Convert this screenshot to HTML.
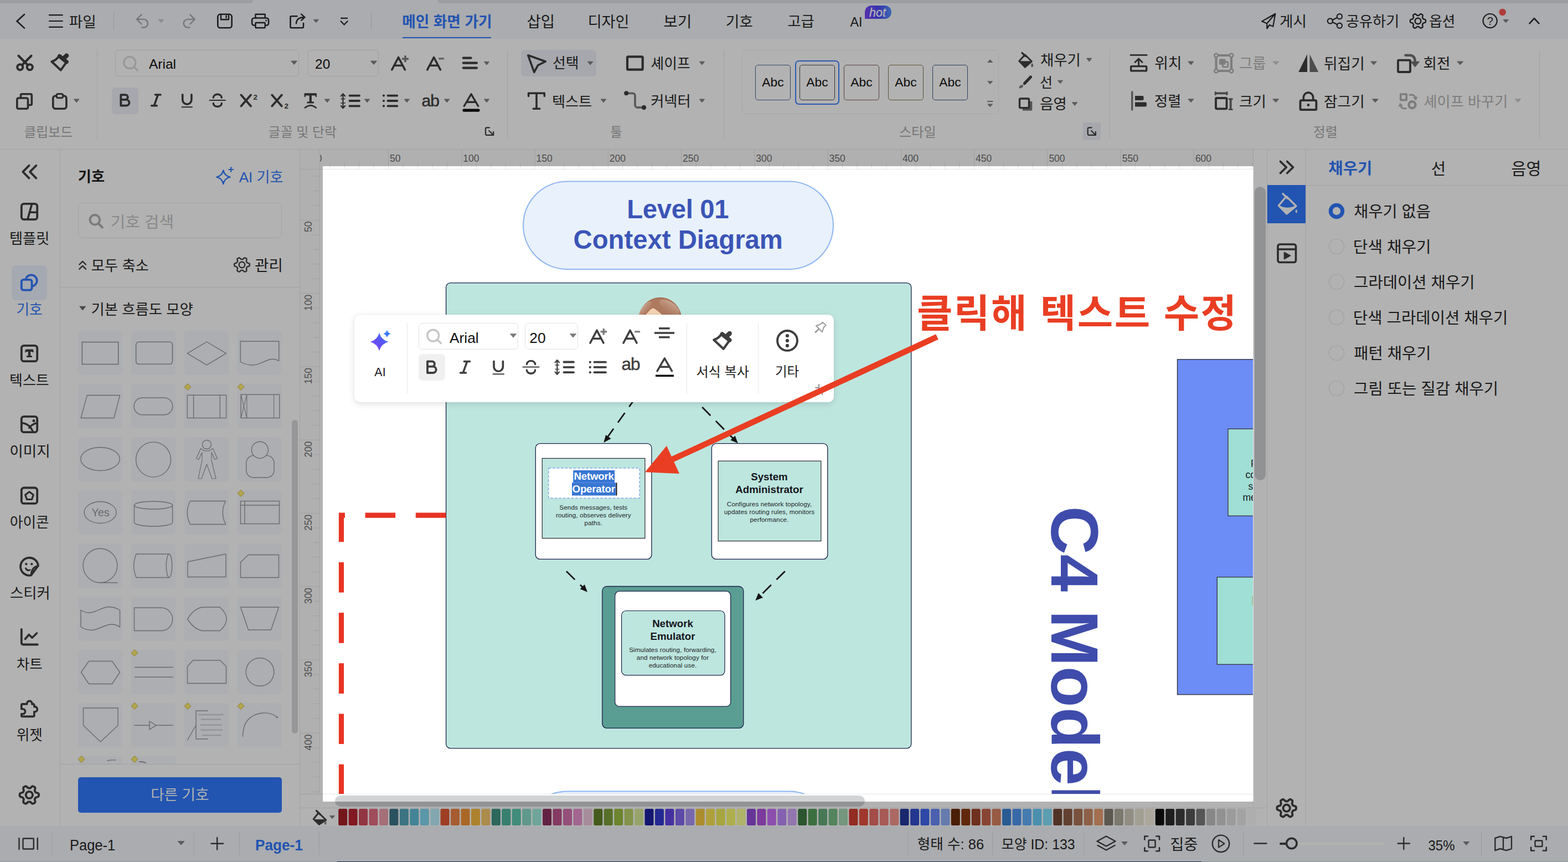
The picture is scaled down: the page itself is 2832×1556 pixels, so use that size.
<!DOCTYPE html><html lang="ko"><head><meta charset="utf-8"><title>EdrawMax</title><style>html,body{margin:0;padding:0}body{width:2832px;height:1556px;position:relative;overflow:hidden;background:#fff;font-family:"Liberation Sans",sans-serif}#ui div,#ui span,#fl div,#fl span{position:absolute;display:block}.L{position:absolute;left:0;top:0;overflow:hidden}#ui,#fl{position:absolute;left:0;top:0;width:2832px;height:1556px}#dim{position:absolute;left:583px;top:300px;width:1681px;height:1147px;box-shadow:0 0 0 3000px rgba(0,0,0,0.3);z-index:9}svg text.k{font-family:"Liberation Sans","Noto Sans CJK KR",sans-serif}</style></head><body><div id="ui" style="z-index:1"><div style="left:2264px;top:270px;width:568px;height:1221px;background:#fff"></div><div style="left:2288px;top:270px;width:1px;height:1221px;background:#e9e9ec"></div><div style="left:2358px;top:270px;width:1px;height:1221px;background:#e9e9ec"></div><div style="left:2359px;top:334px;width:473px;height:1px;background:#e9e9ec"></div><div style="left:2289px;top:334px;width:69px;height:69px;background:#3279fe"></div><div style="left:542px;top:1458px;width:1746px;height:1px;background:#e9e9ec"></div><div style="left:0px;top:1491px;width:2832px;height:65px;background:#f4f6fb"></div><div style="left:93.5px;top:1500.5px;width:1px;height:44px;background:#dfe0e6"></div><div style="left:350px;top:1500.5px;width:1px;height:44px;background:#dfe0e6"></div><div style="left:431.5px;top:1500.5px;width:1px;height:44px;background:#dfe0e6"></div><div style="left:575.5px;top:1500.5px;width:1px;height:44px;background:#dfe0e6"></div><div style="left:1640px;top:1500.5px;width:1px;height:44px;background:#dfe0e6"></div><div style="left:1791.5px;top:1500.5px;width:1px;height:44px;background:#dfe0e6"></div><div style="left:1956.5px;top:1500.5px;width:1px;height:44px;background:#dfe0e6"></div><div style="left:2245px;top:1500.5px;width:1px;height:44px;background:#dfe0e6"></div><div style="left:2674.5px;top:1500.5px;width:1px;height:44px;background:#dfe0e6"></div><div style="left:0px;top:1554.5px;width:609px;height:1.5px;background:#ccd5e5"></div><div style="left:609px;top:1554.5px;width:1561px;height:1.5px;background:#283867"></div><div style="left:2170px;top:1554.5px;width:662px;height:1.5px;background:#c5d1ea"></div><span style="left:126px;top:1514.00px;font-size:25.5px;line-height:25.5px;color:#282828;font-weight:400;font-family:'Liberation Sans',sans-serif;white-space:nowrap;transform:scaleY(1.07);transform-origin:0 21px;">Page-1</span><span style="left:461px;top:1513.00px;font-size:26.2px;line-height:26.2px;color:#3279fe;font-weight:700;font-family:'Liberation Sans',sans-serif;white-space:nowrap;transform:scaleY(1.05);transform-origin:0 22px;">Page-1</span><div style="left:2311px;top:1520.5px;width:190px;height:4px;background:#ffffff;border-radius:2px"></div><div style="left:2311px;top:1520.5px;width:14px;height:4px;background:#3f3f3f;border-radius:2px"></div><span style="left:2579.5px;top:1515.00px;font-size:24px;line-height:24px;color:#282828;font-weight:400;font-family:'Liberation Sans',sans-serif;white-space:nowrap;transform:scaleY(1.07);transform-origin:0 20px;">35%</span><div style="left:0px;top:0px;width:2832px;height:70px;background:#f4f6fb"></div><div style="left:0px;top:0px;width:457px;height:6px;background:#e0e2e7;border-bottom-right-radius:8px"></div><div style="left:790px;top:0px;width:2042px;height:6px;background:#e0e2e7;border-bottom-left-radius:8px"></div><div style="left:0px;top:70px;width:2832px;height:199px;background:#fff"></div><div style="left:0px;top:269px;width:2832px;height:1px;background:#e9e9ec"></div><div style="left:205px;top:22px;width:1px;height:32px;background:#d8d9df"></div><div style="left:670px;top:22px;width:1px;height:32px;background:#d8d9df"></div><div style="left:727px;top:67px;width:160.3px;height:2.3px;background:#3279fe"></div><span style="left:1535.4px;top:29.00px;font-size:23.3px;line-height:23.3px;color:#282828;font-weight:400;font-family:'Liberation Sans',sans-serif;white-space:nowrap;">AI</span><div style="left:1562px;top:10px;width:48px;height:24px;background:linear-gradient(90deg,#7b46fb,#4f49fb 50%,#5496ff);border-radius:12px 12px 12px 0;"><span style="left:8px;top:3.00px;font-size:21.5px;line-height:21.5px;color:#ffffff;font-weight:400;font-family:'Liberation Sans',sans-serif;white-space:nowrap;font-style:italic;-webkit-text-stroke:.3px #ffffff">hot</span></div><span style="left:2691.2px;top:28.00px;font-size:20px;line-height:20px;color:#282828;font-weight:400;font-family:'Liberation Sans',sans-serif;white-space:nowrap;transform:translateX(-50%);">?</span><div style="left:175px;top:90px;width:1px;height:160px;background:#e9e9ec"></div><div style="left:208px;top:90px;width:332px;height:47.6px;border:1px solid #e7e7e7;border-radius:6px;box-sizing:border-box"></div><span style="left:269px;top:104.00px;font-size:24.5px;line-height:24.5px;color:#111111;font-weight:400;font-family:'Liberation Sans',sans-serif;white-space:nowrap;">Arial</span><div style="left:556px;top:90px;width:128px;height:47.6px;border:1px solid #e7e7e7;border-radius:6px;box-sizing:border-box"></div><span style="left:569px;top:104.00px;font-size:24.5px;line-height:24.5px;color:#111111;font-weight:400;font-family:'Liberation Sans',sans-serif;white-space:nowrap;">20</span><div style="left:202px;top:158.3px;width:48px;height:47.4px;background:#f0f1fa;border-radius:6px"></div><span style="left:457.5px;top:169.00px;font-size:13.5px;line-height:13.5px;color:#3f3f3f;font-weight:700;font-family:'Liberation Sans',sans-serif;white-space:nowrap;">2</span><span style="left:513.5px;top:185.00px;font-size:13.5px;line-height:13.5px;color:#3f3f3f;font-weight:700;font-family:'Liberation Sans',sans-serif;white-space:nowrap;">2</span><span style="left:761.5px;top:167.00px;font-size:30px;line-height:30px;color:#3f3f3f;font-weight:400;font-family:'Liberation Sans',sans-serif;white-space:nowrap;letter-spacing:-1px;-webkit-text-stroke:.5px #3f3f3f">ab</span><div style="left:916px;top:90px;width:1px;height:160px;background:#e9e9ec"></div><div style="left:941px;top:90.4px;width:136px;height:47.2px;background:#f0f1fa;border-radius:6px"></div><div style="left:1307px;top:90px;width:1px;height:160px;background:#e9e9ec"></div><div style="left:1340px;top:90px;width:464px;height:115.6px;border:1px solid #f0f0f0;border-radius:8px;box-sizing:border-box"></div><div style="left:1364px;top:117px;width:64px;height:64px;border:1.3px solid #496397;border-radius:5px;box-sizing:border-box"></div><span style="left:1396px;top:137.00px;font-size:22.8px;line-height:22.8px;color:#111111;font-weight:400;font-family:'Liberation Sans',sans-serif;white-space:nowrap;transform:translateX(-50%);">Abc</span><div style="left:1444px;top:117px;width:64px;height:64px;border:1.3px solid #494949;border-radius:5px;box-sizing:border-box"></div><span style="left:1476px;top:137.00px;font-size:22.8px;line-height:22.8px;color:#111111;font-weight:400;font-family:'Liberation Sans',sans-serif;white-space:nowrap;transform:translateX(-50%);">Abc</span><div style="left:1524px;top:117px;width:64px;height:64px;border:1.3px solid #815e5e;border-radius:5px;box-sizing:border-box"></div><span style="left:1556px;top:137.00px;font-size:22.8px;line-height:22.8px;color:#111111;font-weight:400;font-family:'Liberation Sans',sans-serif;white-space:nowrap;transform:translateX(-50%);">Abc</span><div style="left:1604px;top:117px;width:64px;height:64px;border:1.3px solid #837549;border-radius:5px;box-sizing:border-box"></div><span style="left:1636px;top:137.00px;font-size:22.8px;line-height:22.8px;color:#111111;font-weight:400;font-family:'Liberation Sans',sans-serif;white-space:nowrap;transform:translateX(-50%);">Abc</span><div style="left:1684px;top:117px;width:64px;height:64px;border:1.3px solid #3f5683;border-radius:5px;box-sizing:border-box"></div><span style="left:1716px;top:137.00px;font-size:22.8px;line-height:22.8px;color:#111111;font-weight:400;font-family:'Liberation Sans',sans-serif;white-space:nowrap;transform:translateX(-50%);">Abc</span><div style="left:1436px;top:109.2px;width:80px;height:80px;border:2px solid #3c83ff;border-radius:7px;box-sizing:border-box"></div><div style="left:1956px;top:221px;width:32px;height:32px;background:#f0f1fa"></div><div style="left:2004px;top:90px;width:1px;height:160px;background:#e9e9ec"></div><div style="left:2780px;top:90px;width:1px;height:160px;background:#e9e9ec"></div><div style="left:0px;top:270px;width:541px;height:1221px;background:#fff"></div><div style="left:108px;top:270px;width:1px;height:1221px;background:#e9e9ec"></div><div style="left:541px;top:270px;width:1px;height:1221px;background:#e9e9ec"></div><div style="left:21.2px;top:478.5px;width:63.6px;height:63px;background:#edf3ff;border-radius:7px"></div><div style="left:141px;top:366px;width:368px;height:64px;border:1px solid #eaeaea;border-radius:7px;box-sizing:border-box"></div><div style="left:109px;top:518px;width:432px;height:1px;background:#e9e9ec"></div><div style="left:109px;top:1379px;width:432px;height:1px;background:#e9e9ec"></div><div style="left:526.5px;top:757.5px;width:11px;height:566px;background:#d9d9dc;border-radius:6px"></div><div style="left:141px;top:1403px;width:368px;height:63.5px;background:#3279fe;border-radius:5px"></div><div style="left:542px;top:270px;width:1722px;height:35px;background:#fdfdfd"></div><div style="left:542px;top:305px;width:1722px;height:1px;background:#e7e7ed"></div><div style="left:542px;top:306px;width:35px;height:1127px;background:#fdfdfd"></div><div style="left:577px;top:270px;width:1px;height:1163px;background:#e7e7ed"></div><div style="left:542px;top:1433px;width:1722px;height:1px;background:#e7e7ed"></div><div style="left:2263px;top:270px;width:1px;height:1188px;background:#e4e4ec;z-index:2"></div><div style="left:578px;top:1434px;width:1686px;height:24px;background:#fff"></div></div><svg class="L" width="2832" height="1556" viewBox="0 0 2832 1556" style="z-index:2"><path d="M44,26 L30.5,38.3 L44,50.6" fill="none" stroke="#282828" stroke-width="2.6" stroke-linecap="round" stroke-linejoin="round" /><path d="M89,27.2 H112.8 M89,38 H112.8 M89,48.9 H112.8" fill="none" stroke="#282828" stroke-width="2.2" stroke-linecap="round" stroke-linejoin="round" /><text class="k" x="124.76" y="48.68" font-size="26.66" fill="#282828">파일</text><path d="M255.5,26.3 L247,34.9 L255.5,43.5 M247.5,34.9 H260.5 A7.4,7.4 0 0 1 260.5,49.6 H256" fill="none" stroke="#aaaab0" stroke-width="2.4" stroke-linecap="round" stroke-linejoin="round" /><path d="M286.4,35.3 L295.7,35.3 L291.0,40.8 Z" fill="#c5c5cb" stroke="#c5c5cb" stroke-width="1" stroke-linejoin="round"/><path d="M343.2,26.3 L351.7,34.9 L343.2,43.5 M351.2,34.9 H338.2 A7.4,7.4 0 0 0 338.2,49.6 H342.7" fill="none" stroke="#aaaab0" stroke-width="2.4" stroke-linecap="round" stroke-linejoin="round" /><rect x="393.3" y="25.8" width="25.4" height="24.5" rx="4.5" fill="none" stroke="#282828" stroke-width="2.6"/><path d="M399,26 V35.2 H413 V26 M408.6,28.5 V32" fill="none" stroke="#282828" stroke-width="2.4" stroke-linecap="round" stroke-linejoin="round" /><rect x="455.1" y="32.5" width="30" height="13.3" rx="4" fill="none" stroke="#282828" stroke-width="2.6"/><path d="M461.5,32 V25.8 H478.7 V32" fill="none" stroke="#282828" stroke-width="2.4" stroke-linecap="round" stroke-linejoin="round" /><rect x="461.5" y="41" width="17.2" height="9.3" rx="1" fill="#f4f6fb" stroke="#282828" stroke-width="2.4"/><circle cx="480.6" cy="37" r="1.5" fill="#282828"/><path d="M536.5,29.3 H526.5 a2,2 0 0 0 -2,2 V48.3 a2,2 0 0 0 2,2 H546 a2,2 0 0 0 2,-2 V42" fill="none" stroke="#282828" stroke-width="2.6" stroke-linecap="round" stroke-linejoin="round" /><path d="M535,42.5 Q535.5,31.2 549.5,31.2 M544.2,25.6 L550.4,31.2 L544.2,36.8" fill="none" stroke="#282828" stroke-width="2.4" stroke-linecap="round" stroke-linejoin="round" /><path d="M566.3,35.3 L575.5,35.3 L570.9,40.8 Z" fill="#838383" stroke="#838383" stroke-width="1" stroke-linejoin="round"/><path d="M616,32.8 H627.3 M615.5,38.3 L621.6,44.6 L627.8,38.3" fill="none" stroke="#282828" stroke-width="2.2" stroke-linecap="round" stroke-linejoin="round" /><text class="k" x="726.21" y="49.22" font-size="26.72" font-weight="700" fill="#3279fe">메인 화면 가기</text><text class="k" x="951.53" y="49.27" font-size="27.51" fill="#282828">삽입</text><text class="k" x="1061.67" y="48.93" font-size="27.09" fill="#282828">디자인</text><text class="k" x="1198.31" y="49.21" font-size="27.8" fill="#282828">보기</text><text class="k" x="1310.67" y="48.81" font-size="26.72" fill="#282828">기호</text><text class="k" x="1422.38" y="48.28" font-size="26.32" fill="#282828">고급</text><path d="M2303.3,24.8 L2279,38.6 L2288.3,42.3 L2288.3,51.5 L2292.8,45 L2299.3,47.8 Z M2288.3,42.3 L2303.3,24.8" fill="none" stroke="#282828" stroke-width="2.2" stroke-linecap="round" stroke-linejoin="round" /><text class="k" x="2311.07" y="48.16" font-size="26.63" fill="#282828">게시</text><circle cx="2419.4" cy="29.7" r="4.6" fill="none" stroke="#282828" stroke-width="2.2"/><circle cx="2402.4" cy="38" r="4.6" fill="none" stroke="#282828" stroke-width="2.2"/><circle cx="2419.4" cy="46.3" r="4.6" fill="none" stroke="#282828" stroke-width="2.2"/><path d="M2406.5,36 L2415.3,31.7 M2406.5,40 L2415.3,44.3" fill="none" stroke="#282828" stroke-width="2.2" stroke-linecap="round" stroke-linejoin="round" /><text class="k" x="2430.97" y="48" font-size="26.16" fill="#282828">공유하기</text><polygon points="2575.0,38.0 2575.0,38.9 2574.9,39.8 2574.0,40.6 2572.6,41.1 2571.3,41.5 2570.3,41.9 2570.0,42.5 2569.7,43.0 2569.4,43.6 2569.0,44.1 2569.1,45.1 2569.5,46.5 2569.7,48.0 2569.5,49.1 2568.8,49.6 2568.0,50.1 2567.2,50.6 2566.4,50.9 2565.3,50.5 2564.1,49.6 2563.1,48.6 2562.3,48.0 2561.7,48.1 2561.0,48.1 2560.3,48.1 2559.7,48.0 2558.9,48.6 2557.9,49.6 2556.7,50.5 2555.6,50.9 2554.8,50.6 2554.0,50.1 2553.2,49.6 2552.5,49.1 2552.3,48.0 2552.5,46.5 2552.9,45.1 2553.0,44.1 2552.6,43.6 2552.3,43.0 2552.0,42.5 2551.7,41.9 2550.7,41.5 2549.4,41.1 2548.0,40.6 2547.1,39.8 2547.0,38.9 2547.0,38.0 2547.0,37.1 2547.1,36.2 2548.0,35.4 2549.4,34.9 2550.7,34.5 2551.7,34.1 2552.0,33.5 2552.3,33.0 2552.6,32.4 2553.0,31.9 2552.9,30.9 2552.5,29.5 2552.3,28.0 2552.5,26.9 2553.2,26.4 2554.0,25.9 2554.8,25.4 2555.6,25.1 2556.7,25.5 2557.9,26.4 2558.9,27.4 2559.7,28.0 2560.3,27.9 2561.0,27.9 2561.7,27.9 2562.3,28.0 2563.1,27.4 2564.1,26.4 2565.3,25.5 2566.4,25.1 2567.2,25.4 2568.0,25.9 2568.8,26.4 2569.5,26.9 2569.7,28.0 2569.5,29.5 2569.1,30.9 2569.0,31.9 2569.4,32.4 2569.7,33.0 2570.0,33.5 2570.3,34.1 2571.3,34.5 2572.6,34.9 2574.0,35.4 2574.9,36.2 2575.0,37.1" fill="none" stroke="#282828" stroke-width="2.4" stroke-linejoin="round"/><circle cx="2561" cy="38" r="5.32" fill="none" stroke="#282828" stroke-width="2.4"/><text class="k" x="2581.32" y="47.92" font-size="25.58" fill="#282828">옵션</text><circle cx="2691.2" cy="37.6" r="12.6" fill="none" stroke="#282828" stroke-width="2.2"/><circle cx="2713.7" cy="22" r="6.2" fill="#fd5353"/><path d="M2715.1,35.5 L2724.5,35.5 L2719.8,41.0 Z" fill="#838383" stroke="#838383" stroke-width="1" stroke-linejoin="round"/><path d="M2762.5,42.3 L2771,33.2 L2779.5,42.3" fill="none" stroke="#282828" stroke-width="2.6" stroke-linecap="round" stroke-linejoin="round" /><circle cx="36.2" cy="121.3" r="5" fill="none" stroke="#3f3f3f" stroke-width="4"/><circle cx="53.8" cy="121.3" r="5" fill="none" stroke="#3f3f3f" stroke-width="4"/><path d="M40,117.3 L56.5,100.8 M50,117.3 L33.5,100.8" fill="none" stroke="#3f3f3f" stroke-width="4.2" stroke-linecap="round" stroke-linejoin="round" /><g transform="translate(91,96.5) scale(0.945) translate(-1286.8,-597.9)"><path d="M1289.3,613.5 L1306.6,629.8 L1318.4,613.4 L1303.5,602.5 Q1298,610.9 1289.3,613.5 Z" fill="none" stroke="#3f3f3f" stroke-width="4.2" stroke-linecap="round" stroke-linejoin="round" /><path d="M1304.2,603 L1317.8,614" fill="none" stroke="#3f3f3f" stroke-width="7.5" stroke-linecap="round" stroke-linejoin="round" /><path d="M1312.4,607.1 L1317.7,602" fill="none" stroke="#3f3f3f" stroke-width="8.3" stroke-linecap="round" stroke-linejoin="round" /></g><rect x="30.8" y="177" width="19.7" height="19.3" rx="2.5" fill="none" stroke="#3f3f3f" stroke-width="3.6"/><path d="M37.5,176 V171.8 a2,2 0 0 1 2,-2 H55.3 a2,2 0 0 1 2,2 V187.5 a2,2 0 0 1 -2,2 H52" fill="none" stroke="#3f3f3f" stroke-width="3.6" stroke-linecap="round" stroke-linejoin="round" /><rect x="95.8" y="173" width="24.1" height="23.3" rx="4.5" fill="none" stroke="#3f3f3f" stroke-width="3.6"/><rect x="102.3" y="169.5" width="11.2" height="7.3" rx="2.5" fill="#fff" stroke="#3f3f3f" stroke-width="3"/><path d="M133.5,179.0 L143.0,179.0 L138.2,184.9 Z" fill="#838383" stroke="#838383" stroke-width="1" stroke-linejoin="round"/><text class="k" x="43.38" y="247.37" font-size="23.86" fill="#aaaaaa">클립보드</text><circle cx="234.3" cy="113" r="10.6" fill="none" stroke="#dcdcdc" stroke-width="3.4"/><path d="M242.5,121.5 L248.3,126.8" fill="none" stroke="#dcdcdc" stroke-width="3.6" stroke-linecap="round" stroke-linejoin="round" /><path d="M525.9,110.1 L536.5,110.1 L531.2,116.5 Z" fill="#838383" stroke="#838383" stroke-width="1" stroke-linejoin="round"/><path d="M669.5,110.1 L680.5,110.1 L675.0,116.5 Z" fill="#838383" stroke="#838383" stroke-width="1" stroke-linejoin="round"/><path d="M707.8,125.8 L719.6,103.5 L731.4,125.8 M712.3,118.3 H727" fill="none" stroke="#3f3f3f" stroke-width="3.6" stroke-linecap="round" stroke-linejoin="round" /><path d="M726,106.2 H738 M732,100.2 V112.2" fill="none" stroke="#7e7e7e" stroke-width="3.6" stroke-linecap="butt" stroke-linejoin="round" /><path d="M771.8,125.8 L783.6,103.5 L795.4,125.8 M776.3,118.3 H791" fill="none" stroke="#3f3f3f" stroke-width="3.6" stroke-linecap="round" stroke-linejoin="round" /><path d="M792.4,105.8 H802" fill="none" stroke="#8c8c8c" stroke-width="3.3" stroke-linecap="butt" stroke-linejoin="round" /><path d="M836.8,104.6 H850.5 M836.8,113.6 H861 M836.8,122.6 H861" fill="none" stroke="#3f3f3f" stroke-width="4.2" stroke-linecap="round" stroke-linejoin="round" /><path d="M874.5,111.5 L883.5,111.5 L879.0,117.1 Z" fill="#838383" stroke="#838383" stroke-width="1" stroke-linejoin="round"/><path d="M218.3,171.2 V190.7 H228 a5.4,5.4 0 0 0 0,-10.8 H218.3 M226.5,179.9 a4.35,4.35 0 0 0 0,-8.7 H218.3" fill="none" stroke="#3f3f3f" stroke-width="3.8" stroke-linecap="round" stroke-linejoin="round" /><path d="M280.5,171 H290 M273.7,190.8 H283.2 M285.3,171 L278.4,190.8" fill="none" stroke="#3f3f3f" stroke-width="3.6" stroke-linecap="round" stroke-linejoin="round" /><path d="M329.7,170.8 V180 a8.1,8.1 0 0 0 16.2,0 V170.8" fill="none" stroke="#3f3f3f" stroke-width="3.6" stroke-linecap="round" stroke-linejoin="round" /><path d="M328.5,193.2 H347" fill="none" stroke="#3f3f3f" stroke-width="2" stroke-linecap="round" stroke-linejoin="round" /><path d="M378.5,181 H407" fill="none" stroke="#3f3f3f" stroke-width="2" stroke-linecap="round" stroke-linejoin="round" /><path d="M400.3,176.2 a7.5,6 0 0 0 -15,0 M385.3,186.5 a7.5,6 0 0 0 15,0" fill="none" stroke="#3f3f3f" stroke-width="3.4" stroke-linecap="round" stroke-linejoin="round" /><path d="M435.5,171.5 L453,191.5 M453,171.5 L435.5,191.5" fill="none" stroke="#3f3f3f" stroke-width="3.8" stroke-linecap="round" stroke-linejoin="round" /><path d="M491.3,171.5 L508.8,191.5 M508.8,171.5 L491.3,191.5" fill="none" stroke="#3f3f3f" stroke-width="3.8" stroke-linecap="round" stroke-linejoin="round" /><path d="M549.8,170.3 H571.8" fill="none" stroke="#3f3f3f" stroke-width="4.2" stroke-linecap="butt" stroke-linejoin="round" /><path d="M550.8,170.3 V174 M570.8,170.3 V174" fill="none" stroke="#3f3f3f" stroke-width="2.4" stroke-linecap="round" stroke-linejoin="round" /><path d="M560.8,170.5 V184.5" fill="none" stroke="#3f3f3f" stroke-width="4.2" stroke-linecap="butt" stroke-linejoin="round" /><path d="M555.8,185 H565.8" fill="none" stroke="#3f3f3f" stroke-width="3" stroke-linecap="round" stroke-linejoin="round" /><path d="M550.8,194.6 Q560.8,186 570.8,194.6" fill="none" stroke="#3f3f3f" stroke-width="2.6" stroke-linecap="round" stroke-linejoin="round" /><path d="M586.4,179.0 L595.5,179.0 L591.0,184.9 Z" fill="#838383" stroke="#838383" stroke-width="1" stroke-linejoin="round"/><path d="M619.5,169.5 V195 M615.8,173.5 L619.5,169.3 L623.2,173.5 M615.8,191 L619.5,195.2 L623.2,191" fill="none" stroke="#3f3f3f" stroke-width="2.2" stroke-linecap="round" stroke-linejoin="round" /><path d="M616,178.5 H623 M616,186 H623" fill="none" stroke="#3f3f3f" stroke-width="1.6" stroke-linecap="round" stroke-linejoin="round" /><path d="M631.5,172.6 H649 M631.5,182 H649 M631.5,191.4 H649" fill="none" stroke="#3f3f3f" stroke-width="3.8" stroke-linecap="round" stroke-linejoin="round" /><path d="M658.5,179.0 L667.8,179.0 L663.1,184.9 Z" fill="#838383" stroke="#838383" stroke-width="1" stroke-linejoin="round"/><circle cx="693" cy="172.6" r="2.1" fill="#3f3f3f"/><circle cx="693" cy="182" r="2.1" fill="#3f3f3f"/><circle cx="693" cy="191.4" r="2.1" fill="#3f3f3f"/><path d="M700.5,172.6 H717.3 M700.5,182 H717.3 M700.5,191.4 H717.3" fill="none" stroke="#3f3f3f" stroke-width="3.8" stroke-linecap="round" stroke-linejoin="round" /><path d="M730.3,179.0 L739.5,179.0 L734.9,184.9 Z" fill="#838383" stroke="#838383" stroke-width="1" stroke-linejoin="round"/><path d="M802.5,179.0 L811.9,179.0 L807.2,184.9 Z" fill="#838383" stroke="#838383" stroke-width="1" stroke-linejoin="round"/><path d="M838.3,191.5 L851,169.8 L863.7,191.5 M843.3,184.3 H858.7" fill="none" stroke="#3f3f3f" stroke-width="3.4" stroke-linecap="round" stroke-linejoin="round" /><path d="M838,199.1 H864" fill="none" stroke="#0e0e0e" stroke-width="5.2" stroke-linecap="round" stroke-linejoin="round" /><path d="M874.5,179.0 L883.5,179.0 L879.0,184.9 Z" fill="#838383" stroke="#838383" stroke-width="1" stroke-linejoin="round"/><text class="k" x="484.6" y="247.49" font-size="23.97" fill="#aaaaaa">글꼴 및 단락</text><path d="M884,230.3 H879 a2,2 0 0 0 -2,2 V241.8 a2,2 0 0 0 2,2 H888.5 M883.3,236 L891,243.7 M891.2,237.8 V244 H885" fill="none" stroke="#3f3f3f" stroke-width="2.2" stroke-linecap="round" stroke-linejoin="round" /><path d="M953.8,99.8 L985.3,111 L971.5,117.8 L964.8,130.3 Z" fill="none" stroke="#3f3f3f" stroke-width="3.6" stroke-linecap="round" stroke-linejoin="round" /><text class="k" x="997.98" y="123.48" font-size="25.88" fill="#282828">선택</text><path d="M1061.2,111.2 L1071.0,111.2 L1066.1,117.1 Z" fill="#838383" stroke="#838383" stroke-width="1" stroke-linejoin="round"/><rect x="1133" y="102.3" width="27.7" height="23.4" rx="1.5" fill="none" stroke="#3f3f3f" stroke-width="4.2"/><text class="k" x="1175.52" y="123.94" font-size="25.79" fill="#282828">셰이프</text><path d="M1263.3,111.2 L1272.5,111.2 L1267.9,117.1 Z" fill="#838383" stroke="#838383" stroke-width="1" stroke-linejoin="round"/><path d="M954.6,168.2 H983.3 M954.6,168.2 V173.5 M983.3,168.2 V173.5 M969,168.2 V196 M963.3,196.2 H974.7" fill="none" stroke="#3f3f3f" stroke-width="3.6" stroke-linecap="round" stroke-linejoin="round" /><text class="k" x="996.92" y="192.58" font-size="26.16" fill="#282828">텍스트</text><path d="M1085.1,179.0 L1094.9,179.0 L1090.0,184.9 Z" fill="#838383" stroke="#838383" stroke-width="1" stroke-linejoin="round"/><path d="M1135,168.3 H1142.5 a4.5,4.5 0 0 1 4.5,4.5 V189.5 a4.5,4.5 0 0 0 4.5,4.5 H1159" fill="none" stroke="#838383" stroke-width="3.8" stroke-linecap="round" stroke-linejoin="round" /><circle cx="1131.2" cy="168.3" r="4" fill="#3f3f3f"/><circle cx="1163" cy="194" r="4.2" fill="#3f3f3f"/><text class="k" x="1175.16" y="192.12" font-size="26.25" fill="#282828">커넥터</text><path d="M1263.3,179.0 L1272.5,179.0 L1267.9,184.9 Z" fill="#838383" stroke="#838383" stroke-width="1" stroke-linejoin="round"/><text class="k" x="1102.3" y="246.98" font-size="23.44" fill="#aaaaaa">툴</text><path d="M1783,113 L1788.2,107 L1793.5,113 Z" fill="#838383" /><path d="M1783,146.2 L1793.5,146.2 L1788.2,152.2 Z" fill="#838383" /><path d="M1783,182 H1793.5 V184 H1783 Z M1783,187.5 L1793.5,187.5 L1788.2,193.5 Z" fill="#838383" /><text class="k" x="1623.99" y="247.35" font-size="24.16" fill="#aaaaaa">스타일</text><path d="M1851.2,98.8 L1863.3,110.8 L1851.3,121.3 L1840.8,110.3 Z" fill="none" stroke="#3f3f3f" stroke-width="3" stroke-linecap="round" stroke-linejoin="round" /><path d="M1841.5,110.3 H1862.5 L1851.3,121 Z" fill="#3f3f3f" /><path d="M1846,95.5 L1852,101.5" fill="none" stroke="#3f3f3f" stroke-width="3.2" stroke-linecap="round" stroke-linejoin="round" /><path d="M1864.2,115 q2.6,3.6 0,5.8 q-2.6,-2.2 0,-5.8 Z" fill="#797979" stroke="#797979" stroke-width="1.4"/><text class="k" x="1878.89" y="118.3" font-size="26.45" fill="#282828">채우기</text><path d="M1962.5,105.1 L1971.9,105.1 L1967.2,111.0 Z" fill="#838383" stroke="#838383" stroke-width="1" stroke-linejoin="round"/><path d="M1861.5,139 L1850.5,150.5" fill="none" stroke="#3f3f3f" stroke-width="5.2" stroke-linecap="round" stroke-linejoin="round" /><path d="M1840.5,159.5 q0,-7 7.5,-6.5 q0.5,6.8 -7.5,6.5 Z" fill="#818181" /><text class="k" x="1878.34" y="157.5" font-size="24.74" fill="#282828">선</text><path d="M1910.3,145.3 L1919.7,145.3 L1915.0,150.8 Z" fill="#838383" stroke="#838383" stroke-width="1" stroke-linejoin="round"/><path d="M1847,183 H1864.3 V197.8 a2,2 0 0 1 -2,2 H1847 Z" fill="#797979" /><rect x="1841.5" y="178" width="17" height="16.8" rx="2" fill="#fff" stroke="#3f3f3f" stroke-width="3.4"/><text class="k" x="1878.28" y="197.09" font-size="26.33" fill="#282828">음영</text><path d="M1936.4,184.8 L1945.8,184.8 L1941.1,190.5 Z" fill="#838383" stroke="#838383" stroke-width="1" stroke-linejoin="round"/><path d="M1971.7,230.3 H1966.7 a2,2 0 0 0 -2,2 V241.8 a2,2 0 0 0 2,2 H1976.2 M1971,236 L1978.7,243.7 M1978.9,237.8 V244 H1972.7" fill="none" stroke="#3f3f3f" stroke-width="2.2" stroke-linecap="round" stroke-linejoin="round" /><path d="M2042,99.4 H2071.3" fill="none" stroke="#3f3f3f" stroke-width="2.6" stroke-linecap="round" stroke-linejoin="round" /><path d="M2056.6,106.5 V119 M2050.2,112.3 L2056.6,106 L2063,112.3" fill="none" stroke="#3f3f3f" stroke-width="3" stroke-linecap="round" stroke-linejoin="round" /><rect x="2042.6" y="119.6" width="28.1" height="8.3" rx="1.5" fill="none" stroke="#3f3f3f" stroke-width="3.4"/><text class="k" x="2085.21" y="124.33" font-size="26.77" fill="#282828">위치</text><path d="M2145.9,111.0 L2156.0,111.0 L2150.9,117.0 Z" fill="#838383" stroke="#838383" stroke-width="1" stroke-linejoin="round"/><path d="M2044.7,166 V198" fill="none" stroke="#797979" stroke-width="3.4" stroke-linecap="round" stroke-linejoin="round" /><path d="M2050,173 h13.5 a2,2 0 0 1 2,2 v4 a2,2 0 0 1 -2,2 h-13.5 Z M2050,184.5 h18.9 a2,2 0 0 1 2,2 v4 a2,2 0 0 1 -2,2 h-18.9 Z" fill="#3f3f3f" /><text class="k" x="2085.11" y="192.35" font-size="26.25" fill="#282828">정렬</text><path d="M2145.9,178.8 L2156.0,178.8 L2150.9,184.8 Z" fill="#838383" stroke="#838383" stroke-width="1" stroke-linejoin="round"/><rect x="2196.5" y="100" width="27.5" height="28" rx="2" fill="none" stroke="#b4b4b4" stroke-width="4.2"/><circle cx="2196.5" cy="100" r="3.3" fill="#fff" stroke="#b4b4b4" stroke-width="2.6"/><circle cx="2224" cy="100" r="3.3" fill="#fff" stroke="#b4b4b4" stroke-width="2.6"/><circle cx="2196.5" cy="128" r="3.3" fill="#fff" stroke="#b4b4b4" stroke-width="2.6"/><circle cx="2224" cy="128" r="3.3" fill="#fff" stroke="#b4b4b4" stroke-width="2.6"/><rect x="2202" y="106.2" width="11.4" height="10.6" rx="2" fill="#b4b4b4" stroke="#b4b4b4" stroke-width="0.1"/><rect x="2208.3" y="111.7" width="9.5" height="9.1" rx="1.5" fill="none" stroke="#b4b4b4" stroke-width="2.8"/><text class="k" x="2238.09" y="124.23" font-size="26.22" fill="#b4b4b4">그룹</text><path d="M2298.8,111.0 L2309.7,111.0 L2304.2,117.0 Z" fill="#cecece" stroke="#cecece" stroke-width="1" stroke-linejoin="round"/><path d="M2345.3,130 L2361,98 V130 Z" fill="#3f3f3f" /><path d="M2365.5,98 L2381.2,130 H2365.5 Z" fill="#6d6d6d" /><text class="k" x="2390.97" y="124.51" font-size="26.72" fill="#282828">뒤집기</text><path d="M2475.7,111.0 L2486.5,111.0 L2481.1,117.0 Z" fill="#838383" stroke="#838383" stroke-width="1" stroke-linejoin="round"/><rect x="2525" y="108.6" width="22" height="21.4" rx="1.5" fill="none" stroke="#3f3f3f" stroke-width="3.8"/><path d="M2538.5,99.7 H2546.5 a9,9 0 0 1 9,9 V113" fill="none" stroke="#727272" stroke-width="4.6" stroke-linecap="round" stroke-linejoin="round" /><path d="M2548.3,111.3 H2563.2 L2555.8,120.6 Z" fill="#727272" stroke="#727272" stroke-width="1.2" stroke-linejoin="round"/><text class="k" x="2570.44" y="124.46" font-size="26.6" fill="#282828">회전</text><path d="M2631.8,111.0 L2642.7,111.0 L2637.2,117.0 Z" fill="#838383" stroke="#838383" stroke-width="1" stroke-linejoin="round"/><rect x="2196" y="177" width="19.5" height="19.3" rx="1.5" fill="none" stroke="#3f3f3f" stroke-width="3.8"/><path d="M2195.5,168.4 H2215.7" fill="none" stroke="#676767" stroke-width="3.8" stroke-linecap="round" stroke-linejoin="round" /><path d="M2195.3,166.5 V170.5 M2215.9,166.5 V170.5" fill="none" stroke="#676767" stroke-width="3" stroke-linecap="round" stroke-linejoin="round" /><path d="M2222.7,179.5 V197" fill="none" stroke="#676767" stroke-width="3.8" stroke-linecap="round" stroke-linejoin="round" /><path d="M2220,178.8 H2225.4 M2220,197.6 H2225.4" fill="none" stroke="#676767" stroke-width="3" stroke-linecap="round" stroke-linejoin="round" /><text class="k" x="2238.07" y="192.76" font-size="26.59" fill="#282828">크기</text><path d="M2298.8,178.8 L2309.7,178.8 L2304.2,184.8 Z" fill="#838383" stroke="#838383" stroke-width="1" stroke-linejoin="round"/><rect x="2348.5" y="181.2" width="28.9" height="17" rx="2" fill="none" stroke="#3f3f3f" stroke-width="3.8"/><path d="M2354.3,180.5 V175.8 a8.7,8.7 0 0 1 17.4,0 V180.5" fill="none" stroke="#3f3f3f" stroke-width="3.6" stroke-linecap="round" stroke-linejoin="round" /><circle cx="2363" cy="189.6" r="2.4" fill="#3f3f3f"/><text class="k" x="2391" y="192.8" font-size="26.71" fill="#282828">잠그기</text><path d="M2478.4,178.8 L2489.3,178.8 L2483.9,184.8 Z" fill="#838383" stroke="#838383" stroke-width="1" stroke-linejoin="round"/><rect x="2529.7" y="170" width="10.6" height="10.6" rx="1" fill="none" stroke="#b4b4b4" stroke-width="3.6"/><circle cx="2550.5" cy="189.3" r="6" fill="none" stroke="#b4b4b4" stroke-width="4.4"/><path d="M2546,171.3 Q2553.5,169.8 2556.3,176" fill="none" stroke="#b4b4b4" stroke-width="3" stroke-linecap="round" stroke-linejoin="round" /><path d="M2552,176.3 L2560.5,174.3 L2557.6,181.5 Z" fill="#b4b4b4" /><path d="M2539.3,195.7 Q2532,197.2 2529.6,191" fill="none" stroke="#b4b4b4" stroke-width="3" stroke-linecap="round" stroke-linejoin="round" /><path d="M2534,190.7 L2525.5,192.7 L2528.4,185.5 Z" fill="#b4b4b4" /><text class="k" x="2571.51" y="192.59" font-size="26.18" fill="#b4b4b4">셰이프 바꾸기</text><path d="M2736.3,178.8 L2746.9,178.8 L2741.6,184.8 Z" fill="#cecece" stroke="#cecece" stroke-width="1" stroke-linejoin="round"/><text class="k" x="2371.63" y="246.98" font-size="23.95" fill="#aaaaaa">정렬</text><path d="M52.5,298.8 L41.3,310.2 L52.5,321.6 M65.3,298.8 L54.1,310.2 L65.3,321.6" fill="none" stroke="#3f3f3f" stroke-width="3.8" stroke-linecap="round" stroke-linejoin="round" /><text class="k" x="17.02" y="440.35" font-size="26.19" fill="#282828">템플릿</text><rect x="38.8" y="367.8" width="28.4" height="28.4" rx="4.5" fill="none" stroke="#3f3f3f" stroke-width="3.8"/><path d="M57.5,368.5 L50,395.5 M54,383.3 H66.5" fill="none" stroke="#3f3f3f" stroke-width="3.6" stroke-linecap="round" stroke-linejoin="round" /><text class="k" x="29.44" y="568.1" font-size="25.62" fill="#3279fe">기호</text><rect x="38.8" y="504.9" width="18.7" height="18.7" rx="3.5" fill="none" stroke="#3279fe" stroke-width="3.8"/><path d="M46.5,503.9 A10.3,10.3 0 1 1 58.5,516.7" fill="none" stroke="#3279fe" stroke-width="3.8" stroke-linecap="round" stroke-linejoin="round" /><text class="k" x="17.04" y="696.2" font-size="25.93" fill="#282828">텍스트</text><rect x="38.8" y="623.8" width="28.4" height="28.4" rx="4.5" fill="none" stroke="#3f3f3f" stroke-width="3.8"/><path d="M46.3,632.7 H59.7" fill="none" stroke="#3f3f3f" stroke-width="4.4" stroke-linecap="butt" stroke-linejoin="round" /><path d="M46.3,632.7 V635.3 M59.7,632.7 V635.3" fill="none" stroke="#3f3f3f" stroke-width="2" stroke-linecap="round" stroke-linejoin="round" /><path d="M53,632.5 V643" fill="none" stroke="#3f3f3f" stroke-width="4.4" stroke-linecap="butt" stroke-linejoin="round" /><path d="M49.3,643.5 H56.7" fill="none" stroke="#3f3f3f" stroke-width="3" stroke-linecap="round" stroke-linejoin="round" /><text class="k" x="17.19" y="824.47" font-size="26.66" fill="#282828">이미지</text><rect x="38.8" y="751.8" width="28.4" height="28.4" rx="4.5" fill="none" stroke="#3f3f3f" stroke-width="3.8"/><circle cx="61" cy="759.6" r="2.5" fill="#3f3f3f"/><path d="M39.5,763.5 Q54,765 59.5,779.5 M52.8,772.3 Q57.5,765.5 66.5,763.5" fill="none" stroke="#3f3f3f" stroke-width="3.4" stroke-linecap="round" stroke-linejoin="round" /><text class="k" x="17.78" y="952.11" font-size="25.69" fill="#282828">아이콘</text><rect x="38.8" y="880.5" width="28.4" height="28.4" rx="4.5" fill="none" stroke="#3f3f3f" stroke-width="3.8"/><path d="M53,887.8 L60.3,893.2 L57.5,901.5 H48.5 L45.7,893.2 Z" fill="none" stroke="#3f3f3f" stroke-width="3.2" stroke-linecap="round" stroke-linejoin="round" /><text class="k" x="18.09" y="1080.34" font-size="26.29" fill="#282828">스티커</text><path d="M69,1021.2 A16,16 0 1 0 56,1038.5 Z" fill="none" stroke="#3f3f3f" stroke-width="3.8" stroke-linecap="round" stroke-linejoin="round" /><path d="M68.5,1021.7 Q61,1023.7 58.5,1028.7 Q56.5,1032.7 56.2,1038" fill="none" stroke="#3f3f3f" stroke-width="3.4" stroke-linecap="round" stroke-linejoin="round" /><circle cx="47.3" cy="1018.2" r="2.1" fill="#3f3f3f"/><circle cx="57.3" cy="1018.2" r="2.1" fill="#3f3f3f"/><path d="M46.5,1025.9 Q49.5,1031.2 54,1028.7" fill="none" stroke="#3f3f3f" stroke-width="3" stroke-linecap="round" stroke-linejoin="round" /><text class="k" x="29.96" y="1207.99" font-size="25.33" fill="#282828">차트</text><path d="M38.8,1136 V1160.5 a3,3 0 0 0 3,3 H67.8" fill="none" stroke="#3f3f3f" stroke-width="3.8" stroke-linecap="round" stroke-linejoin="round" /><path d="M45.5,1153.5 L52.3,1145.5 L58,1151.3 L66.5,1143" fill="none" stroke="#3f3f3f" stroke-width="3.6" stroke-linecap="round" stroke-linejoin="round" /><text class="k" x="29.77" y="1336.08" font-size="25.61" fill="#282828">위젯</text><path d="M46.5,1270.9 H48.8 a4.6,4.6 0 1 1 9,0 H60 a1.8,1.8 0 0 1 1.8,1.8 V1275.7 a4.7,4.7 0 1 1 0,9.2 V1291.6000000000001 a1.8,1.8 0 0 1 -1.8,1.8 H40.5 a1.8,1.8 0 0 1 -1.8,-1.8 V1288.7 H41 a4.5,4.5 0 1 0 0,-9 H38.7 V1272.7 a1.8,1.8 0 0 1 1.8,-1.8 Z" fill="none" stroke="#3f3f3f" stroke-width="3.6" stroke-linecap="round" stroke-linejoin="round" /><polygon points="70.0,1435.0 70.0,1436.1 69.9,1437.2 68.8,1438.2 67.1,1438.8 65.4,1439.3 64.2,1439.7 63.9,1440.5 63.5,1441.2 63.1,1441.9 62.6,1442.5 62.8,1443.8 63.3,1445.5 63.5,1447.2 63.3,1448.6 62.4,1449.3 61.4,1449.9 60.4,1450.4 59.4,1450.9 58.0,1450.4 56.6,1449.3 55.4,1448.1 54.4,1447.3 53.6,1447.4 52.8,1447.4 52.0,1447.4 51.2,1447.3 50.2,1448.1 49.0,1449.3 47.6,1450.4 46.2,1450.9 45.2,1450.4 44.2,1449.9 43.2,1449.3 42.3,1448.6 42.1,1447.2 42.3,1445.5 42.8,1443.8 43.0,1442.5 42.5,1441.9 42.1,1441.2 41.7,1440.5 41.4,1439.7 40.2,1439.3 38.5,1438.8 36.8,1438.2 35.7,1437.2 35.6,1436.1 35.6,1435.0 35.6,1433.9 35.7,1432.8 36.8,1431.8 38.5,1431.2 40.2,1430.7 41.4,1430.3 41.7,1429.5 42.1,1428.8 42.5,1428.1 43.0,1427.5 42.8,1426.2 42.3,1424.5 42.1,1422.8 42.3,1421.4 43.2,1420.7 44.2,1420.1 45.2,1419.6 46.2,1419.1 47.6,1419.6 49.0,1420.7 50.2,1421.9 51.2,1422.7 52.0,1422.6 52.8,1422.6 53.6,1422.6 54.4,1422.7 55.4,1421.9 56.6,1420.7 58.0,1419.6 59.4,1419.1 60.4,1419.6 61.4,1420.1 62.4,1420.7 63.3,1421.4 63.5,1422.8 63.3,1424.5 62.8,1426.2 62.6,1427.5 63.1,1428.1 63.5,1428.8 63.9,1429.5 64.2,1430.3 65.4,1430.7 67.1,1431.2 68.8,1431.8 69.9,1432.8 70.0,1433.9" fill="none" stroke="#3f3f3f" stroke-width="3.8" stroke-linejoin="round"/><circle cx="52.8" cy="1435" r="6.192" fill="none" stroke="#3f3f3f" stroke-width="3.8"/><text class="k" x="140.87" y="327.62" font-size="26.18" font-weight="700" fill="#1d1d1d">기호</text><path d="M403.3,307.5 Q405.5,317.3 415.5,319.7 Q405.5,322 403.3,332 Q401,322 391.3,319.7 Q401,317.3 403.3,307.5 Z" fill="none" stroke="#3279fe" stroke-width="2.4" stroke-linecap="round" stroke-linejoin="round" /><path d="M417.3,302 V310 M413.3,306 H421.3" fill="none" stroke="#3279fe" stroke-width="2.2" stroke-linecap="round" stroke-linejoin="round" /><text class="k" x="431.7" y="328.54" font-size="26.02" fill="#3279fe">AI 기호</text><circle cx="171.3" cy="396.8" r="8.8" fill="none" stroke="#b1b1b1" stroke-width="3.8"/><path d="M178.3,404 L184.8,410.5" fill="none" stroke="#b1b1b1" stroke-width="4.2" stroke-linecap="round" stroke-linejoin="round" /><text class="k" x="199.64" y="410.83" font-size="28.91" fill="#c5c5c5">기호 검색</text><path d="M143.3,477.5 L149.2,471.8 L155,477.5 M143.3,485.6 L149.2,479.9 L155,485.6" fill="none" stroke="#3f3f3f" stroke-width="2.4" stroke-linecap="round" stroke-linejoin="round" /><text class="k" x="164.69" y="488.74" font-size="26.3" fill="#282828">모두 축소</text><polygon points="450.8,478.0 450.8,478.9 450.7,479.8 449.8,480.5 448.5,481.1 447.1,481.4 446.2,481.8 445.9,482.4 445.6,483.0 445.3,483.5 444.9,484.0 445.0,485.0 445.4,486.4 445.6,487.8 445.4,488.9 444.7,489.5 443.9,490.0 443.1,490.4 442.3,490.7 441.2,490.4 440.1,489.5 439.1,488.5 438.3,487.9 437.6,487.9 437.0,487.9 436.4,487.9 435.7,487.9 434.9,488.5 433.9,489.5 432.8,490.4 431.7,490.7 430.9,490.4 430.1,490.0 429.3,489.5 428.6,488.9 428.4,487.8 428.6,486.4 429.0,485.0 429.1,484.0 428.7,483.5 428.4,483.0 428.1,482.4 427.8,481.8 426.9,481.4 425.5,481.1 424.2,480.5 423.3,479.8 423.2,478.9 423.2,478.0 423.2,477.1 423.3,476.2 424.2,475.5 425.5,474.9 426.9,474.6 427.8,474.2 428.1,473.6 428.4,473.0 428.7,472.5 429.1,472.0 429.0,471.0 428.6,469.6 428.4,468.2 428.6,467.1 429.3,466.5 430.1,466.0 430.9,465.6 431.7,465.3 432.8,465.6 433.9,466.5 434.9,467.5 435.7,468.1 436.4,468.1 437.0,468.1 437.6,468.1 438.3,468.1 439.1,467.5 440.1,466.5 441.2,465.6 442.3,465.3 443.1,465.6 443.9,466.0 444.7,466.5 445.4,467.1 445.6,468.2 445.4,469.6 445.0,471.0 444.9,472.0 445.3,472.5 445.6,473.0 445.9,473.6 446.2,474.2 447.1,474.6 448.5,474.9 449.8,475.5 450.7,476.2 450.8,477.1" fill="none" stroke="#3f3f3f" stroke-width="2.4" stroke-linejoin="round"/><circle cx="437" cy="478" r="5.244" fill="none" stroke="#3f3f3f" stroke-width="2.4"/><text class="k" x="459.98" y="488.74" font-size="27.65" fill="#282828">관리</text><path d="M143,552.8 H155.5 L149.2,560.5 Z" fill="#6a6a6a" /><text class="k" x="164.39" y="567.88" font-size="26.37" fill="#282828">기본 흐름도 모양</text><clipPath id="tilesclip"><rect x="109" y="590" width="432" height="789"/></clipPath><g clip-path="url(#tilesclip)"><rect x="141" y="597" width="80" height="80" rx="6" fill="#f7f9fe"/><g transform="translate(141,597)"><rect x="7.3" y="20.5" width="65.4" height="40" rx="0" fill="none" stroke="#99999c" stroke-width="1.6"/></g><rect x="237" y="597" width="80" height="80" rx="6" fill="#f7f9fe"/><g transform="translate(237,597)"><rect x="8.6" y="20.3" width="65.9" height="40" rx="5" fill="none" stroke="#99999c" stroke-width="1.6"/></g><rect x="333" y="597" width="80" height="80" rx="6" fill="#f7f9fe"/><g transform="translate(333,597)"><path d="M5.3,40.9 L40.4,20 L75.5,40.9 L40.4,61.9 Z" fill="none" stroke="#99999c" stroke-width="1.4" stroke-linecap="round" stroke-linejoin="round" /></g><rect x="429" y="597" width="80" height="80" rx="6" fill="#f7f9fe"/><g transform="translate(429,597)"><path d="M5.2,19 H74.7 V54.5 C58,44 45,62 28,62 C18,62 10,59 5.2,56 Z" fill="none" stroke="#99999c" stroke-width="1.4" stroke-linecap="round" stroke-linejoin="round" /></g><rect x="141" y="693" width="80" height="80" rx="6" fill="#f7f9fe"/><g transform="translate(141,693)"><path d="M5.1,61.5 L16.4,20.5 H75.4 L65,61.5 Z" fill="none" stroke="#99999c" stroke-width="1.4" stroke-linecap="round" stroke-linejoin="round" /></g><rect x="237" y="693" width="80" height="80" rx="6" fill="#f7f9fe"/><g transform="translate(237,693)"><rect x="4.9" y="25" width="69.9" height="30.7" rx="15.3" fill="none" stroke="#99999c" stroke-width="1.4"/></g><rect x="333" y="693" width="80" height="80" rx="6" fill="#f7f9fe"/><g transform="translate(333,693)"><rect x="5.3" y="20.3" width="70.3" height="41.2" rx="0" fill="none" stroke="#99999c" stroke-width="1.4"/><path d="M16.6,20.3 V61.5 M64.3,20.3 V61.5" fill="none" stroke="#99999c" stroke-width="1.4" stroke-linecap="round" stroke-linejoin="round" /></g><path d="M339,692.5 l6,6 l-6,6 l-6,-6 Z" fill="#ffed6d" stroke="#c8b14a" stroke-width="1"/><rect x="429" y="693" width="80" height="80" rx="6" fill="#f7f9fe"/><g transform="translate(429,693)"><rect x="6.1" y="19.3" width="69.7" height="42.2" rx="0" fill="none" stroke="#99999c" stroke-width="1.4"/><path d="M16.8,19.3 V61.5 M65.6,19.3 V61.5 M6.1,19.3 L16.8,61.5 M16.8,19.3 L6.1,61.5" fill="none" stroke="#99999c" stroke-width="1.1" stroke-linecap="round" stroke-linejoin="round" /></g><path d="M435,692.5 l6,6 l-6,6 l-6,-6 Z" fill="#ffed6d" stroke="#c8b14a" stroke-width="1"/><rect x="141" y="789" width="80" height="80" rx="6" fill="#f7f9fe"/><g transform="translate(141,789)"><ellipse cx="40" cy="39.5" rx="35.2" ry="21" fill="none" stroke="#99999c" stroke-width="1.4"/></g><rect x="237" y="789" width="80" height="80" rx="6" fill="#f7f9fe"/><g transform="translate(237,789)"><circle cx="40" cy="40.6" r="31.5" fill="none" stroke="#99999c" stroke-width="1.4"/></g><rect x="333" y="789" width="80" height="80" rx="6" fill="#f7f9fe"/><g transform="translate(333,789)"><circle cx="40.4" cy="13.5" r="8" fill="none" stroke="#99999c" stroke-width="1.4"/><path d="M29.5,20.5 Q40.4,30 51.3,20.5 L59.5,38.5 L55,40.5 L49,27.5 L49,42 L57,75 L50,75 L40.4,49 L31,75 L25,75 L32,42 L32,27.5 L26,40.5 L21.5,38.5 Z" fill="none" stroke="#99999c" stroke-width="1.2" stroke-linecap="round" stroke-linejoin="round" /></g><rect x="429" y="789" width="80" height="80" rx="6" fill="#f7f9fe"/><g transform="translate(429,789)"><rect x="15.8" y="33.4" width="50.2" height="39.6" rx="13" fill="none" stroke="#99999c" stroke-width="1.4"/><circle cx="40.4" cy="23.2" r="15" fill="#f7f9fe" stroke="#99999c" stroke-width="1.4"/></g><rect x="141" y="885" width="80" height="80" rx="6" fill="#f7f9fe"/><g transform="translate(141,885)"><ellipse cx="40" cy="40" rx="29" ry="19.5" fill="none" stroke="#99999c" stroke-width="1.4"/><text x="40.5" y="47.3" font-size="20" text-anchor="middle" fill="#99999c" font-family="Liberation Sans,sans-serif">Yes</text></g><rect x="237" y="885" width="80" height="80" rx="6" fill="#f7f9fe"/><g transform="translate(237,885)"><path d="M5.5,27 V58 A34.5,7 0 0 0 74.5,58 V27" fill="none" stroke="#99999c" stroke-width="1.4" stroke-linecap="round" stroke-linejoin="round" /><ellipse cx="40" cy="27" rx="34.5" ry="7" fill="none" stroke="#99999c" stroke-width="1.4"/></g><rect x="333" y="885" width="80" height="80" rx="6" fill="#f7f9fe"/><g transform="translate(333,885)"><path d="M10.5,19.5 H74.5 Q64,40 74.5,61.5 H10.5 Q0,40 10.5,19.5 Z" fill="none" stroke="#99999c" stroke-width="1.4" stroke-linecap="round" stroke-linejoin="round" /></g><rect x="429" y="885" width="80" height="80" rx="6" fill="#f7f9fe"/><g transform="translate(429,885)"><rect x="5.5" y="19.5" width="70" height="41" rx="0" fill="none" stroke="#99999c" stroke-width="1.4"/><path d="M13,19.5 V60.5 M5.5,27 H75.5" fill="none" stroke="#99999c" stroke-width="1.4" stroke-linecap="round" stroke-linejoin="round" /></g><path d="M435,884.5 l6,6 l-6,6 l-6,-6 Z" fill="#ffed6d" stroke="#c8b14a" stroke-width="1"/><rect x="141" y="981" width="80" height="80" rx="6" fill="#f7f9fe"/><g transform="translate(141,981)"><circle cx="40" cy="40" r="30.8" fill="none" stroke="#99999c" stroke-width="1.4"/><path d="M40,70.8 H71" fill="none" stroke="#99999c" stroke-width="1.4" stroke-linecap="round" stroke-linejoin="round" /></g><rect x="237" y="981" width="80" height="80" rx="6" fill="#f7f9fe"/><g transform="translate(237,981)"><path d="M9,19 H68.5 M9,61.5 H68.5 M9,19 Q0.5,40 9,61.5" fill="none" stroke="#99999c" stroke-width="1.4" stroke-linecap="round" stroke-linejoin="round" /><ellipse cx="68.5" cy="40.2" rx="5.2" ry="21.2" fill="none" stroke="#99999c" stroke-width="1.4"/></g><rect x="333" y="981" width="80" height="80" rx="6" fill="#f7f9fe"/><g transform="translate(333,981)"><path d="M6,33 L75,19 V60.5 H6 Z" fill="none" stroke="#99999c" stroke-width="1.4" stroke-linecap="round" stroke-linejoin="round" /></g><rect x="429" y="981" width="80" height="80" rx="6" fill="#f7f9fe"/><g transform="translate(429,981)"><path d="M5.5,34 L19.5,20.5 H74.5 V61.5 H5.5 Z" fill="none" stroke="#99999c" stroke-width="1.4" stroke-linecap="round" stroke-linejoin="round" /></g><rect x="141" y="1077" width="80" height="80" rx="6" fill="#f7f9fe"/><g transform="translate(141,1077)"><path d="M5,24 C24,38 40,18 56,18.5 C66,19 72,22 75.5,24.5 V55 C56,41 40,61 24,60.5 C14,60 8,57 5,54.5 Z" fill="none" stroke="#99999c" stroke-width="1.4" stroke-linecap="round" stroke-linejoin="round" /></g><rect x="237" y="1077" width="80" height="80" rx="6" fill="#f7f9fe"/><g transform="translate(237,1077)"><path d="M5.5,20 H54 A20.75,20.75 0 0 1 54,61.5 H5.5 Z" fill="none" stroke="#99999c" stroke-width="1.4" stroke-linecap="round" stroke-linejoin="round" /></g><rect x="333" y="1077" width="80" height="80" rx="6" fill="#f7f9fe"/><g transform="translate(333,1077)"><path d="M5.5,40.5 Q17,22 32,19 H64 Q76,29 76,40.5 Q76,52 64,61.5 H32 Q17,58.5 5.5,40.5 Z" fill="none" stroke="#99999c" stroke-width="1.4" stroke-linecap="round" stroke-linejoin="round" /></g><rect x="429" y="1077" width="80" height="80" rx="6" fill="#f7f9fe"/><g transform="translate(429,1077)"><path d="M5.5,19 H74.5 L60.5,60 H19.5 Z" fill="none" stroke="#99999c" stroke-width="1.4" stroke-linecap="round" stroke-linejoin="round" /></g><rect x="141" y="1173" width="80" height="80" rx="6" fill="#f7f9fe"/><g transform="translate(141,1173)"><path d="M5.5,40.5 L19.5,20.5 H61.5 L75.5,40.5 L61.5,61.5 H19.5 Z" fill="none" stroke="#99999c" stroke-width="1.4" stroke-linecap="round" stroke-linejoin="round" /></g><rect x="237" y="1173" width="80" height="80" rx="6" fill="#f7f9fe"/><g transform="translate(237,1173)"><path d="M6.5,31.5 H75.5 M6.5,49.3 H75.5" fill="none" stroke="#99999c" stroke-width="1.4" stroke-linecap="round" stroke-linejoin="round" /></g><path d="M243,1172.5 l6,6 l-6,6 l-6,-6 Z" fill="#ffed6d" stroke="#c8b14a" stroke-width="1"/><rect x="333" y="1173" width="80" height="80" rx="6" fill="#f7f9fe"/><g transform="translate(333,1173)"><path d="M5.5,60.5 V30 L15.5,19 H64.5 L75.5,30 V60.5 Z" fill="none" stroke="#99999c" stroke-width="1.4" stroke-linecap="round" stroke-linejoin="round" /></g><rect x="429" y="1173" width="80" height="80" rx="6" fill="#f7f9fe"/><g transform="translate(429,1173)"><circle cx="40.5" cy="40" r="25.3" fill="none" stroke="#99999c" stroke-width="1.4"/></g><rect x="141" y="1269" width="80" height="80" rx="6" fill="#f7f9fe"/><g transform="translate(141,1269)"><path d="M9.5,9 H72 V40.5 L40.5,70 L9.5,40.5 Z" fill="none" stroke="#99999c" stroke-width="1.4" stroke-linecap="round" stroke-linejoin="round" /></g><rect x="237" y="1269" width="80" height="80" rx="6" fill="#f7f9fe"/><g transform="translate(237,1269)"><path d="M5.5,40.3 H33 M45,40.3 H75" fill="none" stroke="#99999c" stroke-width="1.4" stroke-linecap="round" stroke-linejoin="round" /><path d="M33,33 V47.8 L45,40.3 Z" fill="none" stroke="#99999c" stroke-width="1.4" stroke-linecap="round" stroke-linejoin="round" /></g><path d="M243,1268.5 l6,6 l-6,6 l-6,-6 Z" fill="#ffed6d" stroke="#c8b14a" stroke-width="1"/><rect x="333" y="1269" width="80" height="80" rx="6" fill="#f7f9fe"/><g transform="translate(333,1269)"><path d="M42,14 H21 V65 H42 M21,40 L5.5,67" fill="none" stroke="#99999c" stroke-width="1.4" stroke-linecap="round" stroke-linejoin="round" /><rect x="25" y="20" width="46" height="2.2" fill="#99999c" opacity=".4"/><rect x="30" y="28.5" width="36" height="2.2" fill="#99999c" opacity=".4"/><rect x="29" y="38.5" width="39" height="2.2" fill="#99999c" opacity=".4"/><rect x="29" y="47.5" width="40" height="2.2" fill="#99999c" opacity=".4"/><rect x="32" y="57" width="35" height="2.2" fill="#99999c" opacity=".4"/></g><path d="M339,1268.5 l6,6 l-6,6 l-6,-6 Z" fill="#ffed6d" stroke="#c8b14a" stroke-width="1"/><rect x="429" y="1269" width="80" height="80" rx="6" fill="#f7f9fe"/><g transform="translate(429,1269)"><path d="M9.5,60 Q10,22 45,18 Q60,17 71,25" fill="none" stroke="#99999c" stroke-width="1.4" stroke-linecap="round" stroke-linejoin="round" /><circle cx="71.5" cy="25.8" r="1.6" fill="#99999c"/></g><path d="M435,1268.5 l6,6 l-6,6 l-6,-6 Z" fill="#ffed6d" stroke="#c8b14a" stroke-width="1"/><rect x="141" y="1365" width="80" height="80" rx="6" fill="#f7f9fe"/><g transform="translate(141,1365)"><path d="M53,8 Q60,6.5 68,7" fill="none" stroke="#99999c" stroke-width="1.4" stroke-linecap="round" stroke-linejoin="round" /></g><path d="M147,1364.5 l6,6 l-6,6 l-6,-6 Z" fill="#ffed6d" stroke="#c8b14a" stroke-width="1"/><rect x="237" y="1365" width="80" height="80" rx="6" fill="#f7f9fe"/><g transform="translate(237,1365)"><path d="M15,10 Q22,9.5 26,12" fill="none" stroke="#99999c" stroke-width="2" stroke-linecap="round" stroke-linejoin="round" /></g><path d="M243,1364.5 l6,6 l-6,6 l-6,-6 Z" fill="#ffed6d" stroke="#c8b14a" stroke-width="1"/></g><text class="k" x="272.13" y="1444.26" font-size="26.64" fill="#f9ffff">다른 기호</text><path d="M2312.5,291.5 L2323.3,302 L2312.5,312.5 M2324.7,291.5 L2335.5,302 L2324.7,312.5" fill="none" stroke="#3f3f3f" stroke-width="3.8" stroke-linecap="round" stroke-linejoin="round" /><path d="M2323.3,354.5 L2341,372 L2324,386 L2309.5,371 Z" fill="none" stroke="#ffffff" stroke-width="3.4" stroke-linecap="round" stroke-linejoin="round" /><path d="M2311.5,371.5 Q2325,378 2339.5,371.5 L2324,385 Z" fill="#ffffff" /><path d="M2317,349.8 L2325.5,358.3" fill="none" stroke="#ffffff" stroke-width="3.4" stroke-linecap="round" stroke-linejoin="round" /><path d="M2341.3,377.5 q3.2,4.8 0,7.3 q-3.2,-2.5 0,-7.3 Z" fill="#ffffff" /><rect x="2308" y="441" width="32.5" height="32.5" rx="3.5" fill="none" stroke="#3f3f3f" stroke-width="3.6"/><path d="M2308,450 H2340.5" fill="none" stroke="#3f3f3f" stroke-width="3.4" stroke-linecap="round" stroke-linejoin="round" /><path d="M2319.5,455.5 L2330.5,461.5 L2319.5,467.5 Z" fill="#3f3f3f" stroke="#3f3f3f" stroke-width="1.6" stroke-linejoin="round"/><polygon points="2340.9,1458.7 2340.9,1459.8 2340.8,1460.9 2339.7,1461.9 2338.0,1462.5 2336.3,1463.0 2335.1,1463.4 2334.8,1464.2 2334.4,1464.9 2334.0,1465.6 2333.5,1466.2 2333.7,1467.5 2334.2,1469.2 2334.4,1470.9 2334.2,1472.3 2333.3,1473.0 2332.3,1473.6 2331.3,1474.1 2330.3,1474.6 2328.9,1474.1 2327.5,1473.0 2326.3,1471.8 2325.3,1471.0 2324.5,1471.1 2323.7,1471.1 2322.9,1471.1 2322.1,1471.0 2321.1,1471.8 2319.9,1473.0 2318.5,1474.1 2317.1,1474.6 2316.1,1474.1 2315.1,1473.6 2314.1,1473.0 2313.2,1472.3 2313.0,1470.9 2313.2,1469.2 2313.7,1467.5 2313.9,1466.2 2313.4,1465.6 2313.0,1464.9 2312.6,1464.2 2312.3,1463.4 2311.1,1463.0 2309.4,1462.5 2307.7,1461.9 2306.6,1460.9 2306.5,1459.8 2306.5,1458.7 2306.5,1457.6 2306.6,1456.5 2307.7,1455.5 2309.4,1454.9 2311.1,1454.4 2312.3,1454.0 2312.6,1453.2 2313.0,1452.5 2313.4,1451.8 2313.9,1451.2 2313.7,1449.9 2313.2,1448.2 2313.0,1446.5 2313.2,1445.1 2314.1,1444.4 2315.1,1443.8 2316.1,1443.3 2317.1,1442.8 2318.5,1443.3 2319.9,1444.4 2321.1,1445.6 2322.1,1446.4 2322.9,1446.3 2323.7,1446.3 2324.5,1446.3 2325.3,1446.4 2326.3,1445.6 2327.5,1444.4 2328.9,1443.3 2330.3,1442.8 2331.3,1443.3 2332.3,1443.8 2333.3,1444.4 2334.2,1445.1 2334.4,1446.5 2334.2,1448.2 2333.7,1449.9 2333.5,1451.2 2334.0,1451.8 2334.4,1452.5 2334.8,1453.2 2335.1,1454.0 2336.3,1454.4 2338.0,1454.9 2339.7,1455.5 2340.8,1456.5 2340.9,1457.6" fill="none" stroke="#3f3f3f" stroke-width="3.8" stroke-linejoin="round"/><circle cx="2323.7" cy="1458.7" r="6.192" fill="none" stroke="#3f3f3f" stroke-width="3.8"/><text class="k" x="2399.34" y="314.41" font-size="28.6" font-weight="700" fill="#3279fe">채우기</text><text class="k" x="2584.73" y="315.06" font-size="28.8" fill="#282828">선</text><text class="k" x="2729.53" y="315.01" font-size="29.33" fill="#282828">음영</text><circle cx="2414" cy="381" r="10.7" fill="none" stroke="#3279fe" stroke-width="7"/><text class="k" x="2445.31" y="392.14" font-size="28.42" fill="#282828">채우기 없음</text><circle cx="2414" cy="445" r="13.5" fill="#ffffff" stroke="#e7e7e7" stroke-width="1.2"/><text class="k" x="2443.84" y="456.32" font-size="28.88" fill="#282828">단색 채우기</text><circle cx="2414" cy="509" r="13.5" fill="#ffffff" stroke="#e7e7e7" stroke-width="1.2"/><text class="k" x="2445.07" y="520.2" font-size="28.61" fill="#282828">그라데이션 채우기</text><circle cx="2414" cy="573" r="13.5" fill="#ffffff" stroke="#e7e7e7" stroke-width="1.2"/><text class="k" x="2443.86" y="584.22" font-size="28.66" fill="#282828">단색 그라데이션 채우기</text><circle cx="2414" cy="637" r="13.5" fill="#ffffff" stroke="#e7e7e7" stroke-width="1.2"/><text class="k" x="2445.36" y="648.2" font-size="28.56" fill="#282828">패턴 채우기</text><circle cx="2414" cy="701" r="13.5" fill="#ffffff" stroke="#e7e7e7" stroke-width="1.2"/><text class="k" x="2445.07" y="712.24" font-size="28.67" fill="#282828">그림 또는 질감 채우기</text><path d="M575.5,1467 L588.8,1480.3 L576.3,1488.3 L566.3,1478.5 Z" fill="none" stroke="#3f3f3f" stroke-width="3" stroke-linecap="round" stroke-linejoin="round" /><path d="M567.5,1479 H587.5 L576.3,1488 Z" fill="#3f3f3f" /><path d="M571.5,1463.5 L578,1470" fill="none" stroke="#3f3f3f" stroke-width="3.2" stroke-linecap="round" stroke-linejoin="round" /><path d="M587.7,1481.3 q3.8,5.2 0,7.8 q-3.8,-2.6 0,-7.8 Z" fill="#898989" /><path d="M595.5,1472.5 L604.5,1472.5 L600.0,1477.7 Z" fill="#838383" stroke="#838383" stroke-width="1" stroke-linejoin="round"/><rect x="611.2" y="1460" width="16" height="30" rx="2.5" fill="#a62127"/><rect x="629.6" y="1460" width="16" height="30" rx="2.5" fill="#bb2531"/><rect x="648.1" y="1460" width="16" height="30" rx="2.5" fill="#d24c60"/><rect x="666.5" y="1460" width="16" height="30" rx="2.5" fill="#e56d82"/><rect x="685.0" y="1460" width="16" height="30" rx="2.5" fill="#eca0ae"/><rect x="703.4" y="1460" width="16" height="30" rx="2.5" fill="#3d7589"/><rect x="721.9" y="1460" width="16" height="30" rx="2.5" fill="#56a7bb"/><rect x="740.3" y="1460" width="16" height="30" rx="2.5" fill="#61bdd8"/><rect x="758.8" y="1460" width="16" height="30" rx="2.5" fill="#82d8f1"/><rect x="777.2" y="1460" width="16" height="30" rx="2.5" fill="#baf0fe"/><rect x="795.6" y="1460" width="16" height="30" rx="2.5" fill="#e35a31"/><rect x="814.1" y="1460" width="16" height="30" rx="2.5" fill="#f08547"/><rect x="832.5" y="1460" width="16" height="30" rx="2.5" fill="#f39636"/><rect x="851.0" y="1460" width="16" height="30" rx="2.5" fill="#f7ba42"/><rect x="869.4" y="1460" width="16" height="30" rx="2.5" fill="#f7c96d"/><rect x="887.9" y="1460" width="16" height="30" rx="2.5" fill="#3f9683"/><rect x="906.3" y="1460" width="16" height="30" rx="2.5" fill="#50b79f"/><rect x="924.7" y="1460" width="16" height="30" rx="2.5" fill="#5dc9b0"/><rect x="943.2" y="1460" width="16" height="30" rx="2.5" fill="#88dbc8"/><rect x="961.6" y="1460" width="16" height="30" rx="2.5" fill="#a0ecdd"/><rect x="980.1" y="1460" width="16" height="30" rx="2.5" fill="#8f3161"/><rect x="998.5" y="1460" width="16" height="30" rx="2.5" fill="#bd538f"/><rect x="1017.0" y="1460" width="16" height="30" rx="2.5" fill="#d571b1"/><rect x="1035.4" y="1460" width="16" height="30" rx="2.5" fill="#e992ce"/><rect x="1053.9" y="1460" width="16" height="30" rx="2.5" fill="#f0cbdf"/><rect x="1072.3" y="1460" width="16" height="30" rx="2.5" fill="#648328"/><rect x="1090.7" y="1460" width="16" height="30" rx="2.5" fill="#7ba03c"/><rect x="1109.2" y="1460" width="16" height="30" rx="2.5" fill="#9dbf42"/><rect x="1127.6" y="1460" width="16" height="30" rx="2.5" fill="#bdd36a"/><rect x="1146.1" y="1460" width="16" height="30" rx="2.5" fill="#d9ea9a"/><rect x="1164.5" y="1460" width="16" height="30" rx="2.5" fill="#1d22a3"/><rect x="1183.0" y="1460" width="16" height="30" rx="2.5" fill="#333cd1"/><rect x="1201.4" y="1460" width="16" height="30" rx="2.5" fill="#6445e7"/><rect x="1219.9" y="1460" width="16" height="30" rx="2.5" fill="#866af3"/><rect x="1238.3" y="1460" width="16" height="30" rx="2.5" fill="#ab95f9"/><rect x="1256.7" y="1460" width="16" height="30" rx="2.5" fill="#f6cb42"/><rect x="1275.2" y="1460" width="16" height="30" rx="2.5" fill="#fbe556"/><rect x="1293.6" y="1460" width="16" height="30" rx="2.5" fill="#f0ed59"/><rect x="1312.1" y="1460" width="16" height="30" rx="2.5" fill="#fbfb6f"/><rect x="1330.5" y="1460" width="16" height="30" rx="2.5" fill="#fbff97"/><rect x="1349.0" y="1460" width="16" height="30" rx="2.5" fill="#924ddc"/><rect x="1367.4" y="1460" width="16" height="30" rx="2.5" fill="#b453e2"/><rect x="1385.8" y="1460" width="16" height="30" rx="2.5" fill="#cb72f9"/><rect x="1404.3" y="1460" width="16" height="30" rx="2.5" fill="#bd8cfe"/><rect x="1422.7" y="1460" width="16" height="30" rx="2.5" fill="#d3a9fb"/><rect x="1441.2" y="1460" width="16" height="30" rx="2.5" fill="#3f7b45"/><rect x="1459.6" y="1460" width="16" height="30" rx="2.5" fill="#56a05b"/><rect x="1478.1" y="1460" width="16" height="30" rx="2.5" fill="#67ab7b"/><rect x="1496.5" y="1460" width="16" height="30" rx="2.5" fill="#78bd86"/><rect x="1515.0" y="1460" width="16" height="30" rx="2.5" fill="#a6d9b4"/><rect x="1533.4" y="1460" width="16" height="30" rx="2.5" fill="#d33f31"/><rect x="1551.8" y="1460" width="16" height="30" rx="2.5" fill="#e7503f"/><rect x="1570.3" y="1460" width="16" height="30" rx="2.5" fill="#ea6d67"/><rect x="1588.7" y="1460" width="16" height="30" rx="2.5" fill="#f0817b"/><rect x="1607.2" y="1460" width="16" height="30" rx="2.5" fill="#f6978f"/><rect x="1625.6" y="1460" width="16" height="30" rx="2.5" fill="#2539a0"/><rect x="1644.1" y="1460" width="16" height="30" rx="2.5" fill="#3350ce"/><rect x="1662.5" y="1460" width="16" height="30" rx="2.5" fill="#4267f0"/><rect x="1681.0" y="1460" width="16" height="30" rx="2.5" fill="#6a8cfb"/><rect x="1699.4" y="1460" width="16" height="30" rx="2.5" fill="#92b1f9"/><rect x="1717.8" y="1460" width="16" height="30" rx="2.5" fill="#6a2b0b"/><rect x="1736.3" y="1460" width="16" height="30" rx="2.5" fill="#8c3911"/><rect x="1754.7" y="1460" width="16" height="30" rx="2.5" fill="#a0452b"/><rect x="1773.2" y="1460" width="16" height="30" rx="2.5" fill="#c5644a"/><rect x="1791.6" y="1460" width="16" height="30" rx="2.5" fill="#d98161"/><rect x="1810.1" y="1460" width="16" height="30" rx="2.5" fill="#3c83d3"/><rect x="1828.5" y="1460" width="16" height="30" rx="2.5" fill="#5097f3"/><rect x="1846.9" y="1460" width="16" height="30" rx="2.5" fill="#63b1fe"/><rect x="1865.4" y="1460" width="16" height="30" rx="2.5" fill="#6acef9"/><rect x="1883.8" y="1460" width="16" height="30" rx="2.5" fill="#86e2fe"/><rect x="1902.3" y="1460" width="16" height="30" rx="2.5" fill="#754a36"/><rect x="1920.7" y="1460" width="16" height="30" rx="2.5" fill="#8f5e47"/><rect x="1939.2" y="1460" width="16" height="30" rx="2.5" fill="#ae7556"/><rect x="1957.6" y="1460" width="16" height="30" rx="2.5" fill="#cb8c67"/><rect x="1976.1" y="1460" width="16" height="30" rx="2.5" fill="#eaa072"/><rect x="1994.5" y="1460" width="16" height="30" rx="2.5" fill="#867e72"/><rect x="2012.9" y="1460" width="16" height="30" rx="2.5" fill="#b1ae9d"/><rect x="2031.4" y="1460" width="16" height="30" rx="2.5" fill="#d1cbba"/><rect x="2049.8" y="1460" width="16" height="30" rx="2.5" fill="#e7e2d1"/><rect x="2068.3" y="1460" width="16" height="30" rx="2.5" fill="#f6f0df"/><rect x="2086.7" y="1460" width="16" height="30" rx="2.5" fill="#111111"/><rect x="2105.2" y="1460" width="16" height="30" rx="2.5" fill="#2b2b2b"/><rect x="2123.6" y="1460" width="16" height="30" rx="2.5" fill="#3f3f3f"/><rect x="2142.1" y="1460" width="16" height="30" rx="2.5" fill="#565656"/><rect x="2160.5" y="1460" width="16" height="30" rx="2.5" fill="#7b7b7b"/><rect x="2178.9" y="1460" width="16" height="30" rx="2.5" fill="#c2c2c2"/><rect x="2197.4" y="1460" width="16" height="30" rx="2.5" fill="#d1d1d1"/><rect x="2215.8" y="1460" width="16" height="30" rx="2.5" fill="#dfdfdf"/><rect x="2234.3" y="1460" width="16" height="30" rx="2.5" fill="#eaeaea"/><rect x="2252.7" y="1460" width="16" height="30" rx="2.5" fill="#f9f9f9"/><rect x="2271.2" y="1460" width="16" height="30" rx="2.5" fill="#ffffff"/><rect x="41.5" y="1513.5" width="19.3" height="19" rx="1" fill="none" stroke="#3f3f3f" stroke-width="2.4"/><path d="M34.5,1513 V1533 M67.8,1513 V1533" fill="none" stroke="#3f3f3f" stroke-width="2.4" stroke-linecap="round" stroke-linejoin="round" /><path d="M321.2,1518.5 L333.0,1518.5 L327.1,1525.0 Z" fill="#838383" stroke="#838383" stroke-width="1" stroke-linejoin="round"/><path d="M381.5,1522.7 H403 M392.2,1512 V1533.5" fill="none" stroke="#3f3f3f" stroke-width="2.4" stroke-linecap="round" stroke-linejoin="round" /><text class="k" x="1656.69" y="1533.19" font-size="25.61" fill="#282828">형태 수: 86</text><text class="k" x="1808.76" y="1532.84" font-size="24.89" fill="#282828">모양 ID: 133</text><path d="M1998,1509.5 L2014.5,1518.5 L1998,1527.5 L1981.5,1518.5 Z M1982.5,1526 L1998,1534.5 L2013.5,1526" fill="none" stroke="#3f3f3f" stroke-width="2.4" stroke-linecap="round" stroke-linejoin="round" /><path d="M2025.9,1519.5 L2036.2,1519.5 L2031.1,1525.5 Z" fill="#838383" stroke="#838383" stroke-width="1" stroke-linejoin="round"/><path d="M2073,1509.5 H2067.3 V1515.5 M2088.2,1509.5 H2094 V1515.5 M2073,1536.3 H2067.3 V1530.3 M2088.2,1536.3 H2094 V1530.3" fill="none" stroke="#3f3f3f" stroke-width="2.6" stroke-linecap="round" stroke-linejoin="round" /><rect x="2074.5" y="1516.5" width="12" height="13" rx="1.5" fill="none" stroke="#3f3f3f" stroke-width="2.4"/><text class="k" x="2113.34" y="1533.73" font-size="27.23" fill="#282828">집중</text><circle cx="2205" cy="1522.8" r="15.2" fill="none" stroke="#3f3f3f" stroke-width="2.4"/><path d="M2201,1516 L2211.5,1522.8 L2201,1529.6 Z" fill="none" stroke="#3f3f3f" stroke-width="2.2" stroke-linecap="round" stroke-linejoin="round" /><path d="M2265.5,1522.5 H2287.5" fill="none" stroke="#3f3f3f" stroke-width="2.4" stroke-linecap="round" stroke-linejoin="round" /><circle cx="2332.8" cy="1522.5" r="9.3" fill="#f4f6fb" stroke="#3f3f3f" stroke-width="3.6"/><path d="M2524.8,1522.5 H2545.8 M2535.3,1512 V1533" fill="none" stroke="#3f3f3f" stroke-width="2.4" stroke-linecap="round" stroke-linejoin="round" /><path d="M2643.1,1519.5 L2653.5,1519.5 L2648.3,1525.5 Z" fill="#838383" stroke="#838383" stroke-width="1" stroke-linejoin="round"/><path d="M2700.3,1513 L2709.5,1509.8 L2720.5,1513 L2730,1509.8 V1532 L2720.5,1535.2 L2709.5,1532 L2700.3,1535.2 Z M2715,1511.5 V1533.5" fill="none" stroke="#3f3f3f" stroke-width="2.4" stroke-linecap="round" stroke-linejoin="round" /><path d="M2771,1509.8 H2765.2 V1515.8 M2787,1509.8 H2792.8 V1515.8 M2771,1535.5 H2765.2 V1529.5 M2787,1535.5 H2792.8 V1529.5" fill="none" stroke="#3f3f3f" stroke-width="2.6" stroke-linecap="round" stroke-linejoin="round" /><rect x="2772.5" y="1517.5" width="13" height="10.5" rx="1" fill="none" stroke="#3f3f3f" stroke-width="2.4"/><clipPath id="hrc"><rect x="578" y="270" width="1685" height="36"/></clipPath><g clip-path="url(#hrc)"><rect x="568.7" y="270" width="1" height="35" fill="#e5e5ea"/><rect x="595.2" y="294" width="1" height="11" fill="#e5e5ea"/><rect x="621.6" y="294" width="1" height="11" fill="#e5e5ea"/><rect x="648.1" y="294" width="1" height="11" fill="#e5e5ea"/><rect x="674.5" y="294" width="1" height="11" fill="#e5e5ea"/><text x="571.7" y="292.3" font-size="17.5" fill="#6d6d6d" font-family="Liberation Sans,sans-serif">0</text><rect x="701.0" y="270" width="1" height="35" fill="#e5e5ea"/><rect x="727.4" y="294" width="1" height="11" fill="#e5e5ea"/><rect x="753.9" y="294" width="1" height="11" fill="#e5e5ea"/><rect x="780.3" y="294" width="1" height="11" fill="#e5e5ea"/><rect x="806.8" y="294" width="1" height="11" fill="#e5e5ea"/><text x="704.0" y="292.3" font-size="17.5" fill="#6d6d6d" font-family="Liberation Sans,sans-serif">50</text><rect x="833.2" y="270" width="1" height="35" fill="#e5e5ea"/><rect x="859.7" y="294" width="1" height="11" fill="#e5e5ea"/><rect x="886.1" y="294" width="1" height="11" fill="#e5e5ea"/><rect x="912.6" y="294" width="1" height="11" fill="#e5e5ea"/><rect x="939.1" y="294" width="1" height="11" fill="#e5e5ea"/><text x="836.2" y="292.3" font-size="17.5" fill="#6d6d6d" font-family="Liberation Sans,sans-serif">100</text><rect x="965.5" y="270" width="1" height="35" fill="#e5e5ea"/><rect x="992.0" y="294" width="1" height="11" fill="#e5e5ea"/><rect x="1018.4" y="294" width="1" height="11" fill="#e5e5ea"/><rect x="1044.9" y="294" width="1" height="11" fill="#e5e5ea"/><rect x="1071.3" y="294" width="1" height="11" fill="#e5e5ea"/><text x="968.5" y="292.3" font-size="17.5" fill="#6d6d6d" font-family="Liberation Sans,sans-serif">150</text><rect x="1097.8" y="270" width="1" height="35" fill="#e5e5ea"/><rect x="1124.2" y="294" width="1" height="11" fill="#e5e5ea"/><rect x="1150.7" y="294" width="1" height="11" fill="#e5e5ea"/><rect x="1177.1" y="294" width="1" height="11" fill="#e5e5ea"/><rect x="1203.6" y="294" width="1" height="11" fill="#e5e5ea"/><text x="1100.8" y="292.3" font-size="17.5" fill="#6d6d6d" font-family="Liberation Sans,sans-serif">200</text><rect x="1230.1" y="270" width="1" height="35" fill="#e5e5ea"/><rect x="1256.5" y="294" width="1" height="11" fill="#e5e5ea"/><rect x="1283.0" y="294" width="1" height="11" fill="#e5e5ea"/><rect x="1309.4" y="294" width="1" height="11" fill="#e5e5ea"/><rect x="1335.9" y="294" width="1" height="11" fill="#e5e5ea"/><text x="1233.1" y="292.3" font-size="17.5" fill="#6d6d6d" font-family="Liberation Sans,sans-serif">250</text><rect x="1362.3" y="270" width="1" height="35" fill="#e5e5ea"/><rect x="1388.8" y="294" width="1" height="11" fill="#e5e5ea"/><rect x="1415.2" y="294" width="1" height="11" fill="#e5e5ea"/><rect x="1441.7" y="294" width="1" height="11" fill="#e5e5ea"/><rect x="1468.1" y="294" width="1" height="11" fill="#e5e5ea"/><text x="1365.3" y="292.3" font-size="17.5" fill="#6d6d6d" font-family="Liberation Sans,sans-serif">300</text><rect x="1494.6" y="270" width="1" height="35" fill="#e5e5ea"/><rect x="1521.0" y="294" width="1" height="11" fill="#e5e5ea"/><rect x="1547.5" y="294" width="1" height="11" fill="#e5e5ea"/><rect x="1574.0" y="294" width="1" height="11" fill="#e5e5ea"/><rect x="1600.4" y="294" width="1" height="11" fill="#e5e5ea"/><text x="1497.6" y="292.3" font-size="17.5" fill="#6d6d6d" font-family="Liberation Sans,sans-serif">350</text><rect x="1626.9" y="270" width="1" height="35" fill="#e5e5ea"/><rect x="1653.3" y="294" width="1" height="11" fill="#e5e5ea"/><rect x="1679.8" y="294" width="1" height="11" fill="#e5e5ea"/><rect x="1706.2" y="294" width="1" height="11" fill="#e5e5ea"/><rect x="1732.7" y="294" width="1" height="11" fill="#e5e5ea"/><text x="1629.9" y="292.3" font-size="17.5" fill="#6d6d6d" font-family="Liberation Sans,sans-serif">400</text><rect x="1759.1" y="270" width="1" height="35" fill="#e5e5ea"/><rect x="1785.6" y="294" width="1" height="11" fill="#e5e5ea"/><rect x="1812.0" y="294" width="1" height="11" fill="#e5e5ea"/><rect x="1838.5" y="294" width="1" height="11" fill="#e5e5ea"/><rect x="1864.9" y="294" width="1" height="11" fill="#e5e5ea"/><text x="1762.1" y="292.3" font-size="17.5" fill="#6d6d6d" font-family="Liberation Sans,sans-serif">450</text><rect x="1891.4" y="270" width="1" height="35" fill="#e5e5ea"/><rect x="1917.9" y="294" width="1" height="11" fill="#e5e5ea"/><rect x="1944.3" y="294" width="1" height="11" fill="#e5e5ea"/><rect x="1970.8" y="294" width="1" height="11" fill="#e5e5ea"/><rect x="1997.2" y="294" width="1" height="11" fill="#e5e5ea"/><text x="1894.4" y="292.3" font-size="17.5" fill="#6d6d6d" font-family="Liberation Sans,sans-serif">500</text><rect x="2023.7" y="270" width="1" height="35" fill="#e5e5ea"/><rect x="2050.1" y="294" width="1" height="11" fill="#e5e5ea"/><rect x="2076.6" y="294" width="1" height="11" fill="#e5e5ea"/><rect x="2103.0" y="294" width="1" height="11" fill="#e5e5ea"/><rect x="2129.5" y="294" width="1" height="11" fill="#e5e5ea"/><text x="2026.7" y="292.3" font-size="17.5" fill="#6d6d6d" font-family="Liberation Sans,sans-serif">550</text><rect x="2155.9" y="270" width="1" height="35" fill="#e5e5ea"/><rect x="2182.4" y="294" width="1" height="11" fill="#e5e5ea"/><rect x="2208.8" y="294" width="1" height="11" fill="#e5e5ea"/><rect x="2235.3" y="294" width="1" height="11" fill="#e5e5ea"/><rect x="2261.8" y="294" width="1" height="11" fill="#e5e5ea"/><text x="2158.9" y="292.3" font-size="17.5" fill="#6d6d6d" font-family="Liberation Sans,sans-serif">600</text><rect x="2288.2" y="270" width="1" height="35" fill="#e5e5ea"/><rect x="2314.7" y="294" width="1" height="11" fill="#e5e5ea"/><rect x="2341.1" y="294" width="1" height="11" fill="#e5e5ea"/><rect x="2367.6" y="294" width="1" height="11" fill="#e5e5ea"/><rect x="2394.0" y="294" width="1" height="11" fill="#e5e5ea"/><text x="2291.2" y="292.3" font-size="17.5" fill="#6d6d6d" font-family="Liberation Sans,sans-serif">650</text></g><clipPath id="vrc"><rect x="542" y="306" width="35" height="1127"/></clipPath><g clip-path="url(#vrc)"><rect x="542" y="264.6" width="35" height="1" fill="#e5e5ea"/><rect x="566" y="291.1" width="11" height="1" fill="#e5e5ea"/><rect x="566" y="317.5" width="11" height="1" fill="#e5e5ea"/><rect x="566" y="344.0" width="11" height="1" fill="#e5e5ea"/><rect x="566" y="370.4" width="11" height="1" fill="#e5e5ea"/><text transform="translate(563.3,267.3) rotate(-90)" text-anchor="end" font-size="17.5" fill="#6d6d6d" font-family="Liberation Sans,sans-serif">0</text><rect x="542" y="396.9" width="35" height="1" fill="#e5e5ea"/><rect x="566" y="423.3" width="11" height="1" fill="#e5e5ea"/><rect x="566" y="449.8" width="11" height="1" fill="#e5e5ea"/><rect x="566" y="476.2" width="11" height="1" fill="#e5e5ea"/><rect x="566" y="502.7" width="11" height="1" fill="#e5e5ea"/><text transform="translate(563.3,399.6) rotate(-90)" text-anchor="end" font-size="17.5" fill="#6d6d6d" font-family="Liberation Sans,sans-serif">50</text><rect x="542" y="529.1" width="35" height="1" fill="#e5e5ea"/><rect x="566" y="555.6" width="11" height="1" fill="#e5e5ea"/><rect x="566" y="582.0" width="11" height="1" fill="#e5e5ea"/><rect x="566" y="608.5" width="11" height="1" fill="#e5e5ea"/><rect x="566" y="635.0" width="11" height="1" fill="#e5e5ea"/><text transform="translate(563.3,531.8) rotate(-90)" text-anchor="end" font-size="17.5" fill="#6d6d6d" font-family="Liberation Sans,sans-serif">100</text><rect x="542" y="661.4" width="35" height="1" fill="#e5e5ea"/><rect x="566" y="687.9" width="11" height="1" fill="#e5e5ea"/><rect x="566" y="714.3" width="11" height="1" fill="#e5e5ea"/><rect x="566" y="740.8" width="11" height="1" fill="#e5e5ea"/><rect x="566" y="767.2" width="11" height="1" fill="#e5e5ea"/><text transform="translate(563.3,664.1) rotate(-90)" text-anchor="end" font-size="17.5" fill="#6d6d6d" font-family="Liberation Sans,sans-serif">150</text><rect x="542" y="793.7" width="35" height="1" fill="#e5e5ea"/><rect x="566" y="820.1" width="11" height="1" fill="#e5e5ea"/><rect x="566" y="846.6" width="11" height="1" fill="#e5e5ea"/><rect x="566" y="873.0" width="11" height="1" fill="#e5e5ea"/><rect x="566" y="899.5" width="11" height="1" fill="#e5e5ea"/><text transform="translate(563.3,796.4) rotate(-90)" text-anchor="end" font-size="17.5" fill="#6d6d6d" font-family="Liberation Sans,sans-serif">200</text><rect x="542" y="926.0" width="35" height="1" fill="#e5e5ea"/><rect x="566" y="952.4" width="11" height="1" fill="#e5e5ea"/><rect x="566" y="978.9" width="11" height="1" fill="#e5e5ea"/><rect x="566" y="1005.3" width="11" height="1" fill="#e5e5ea"/><rect x="566" y="1031.8" width="11" height="1" fill="#e5e5ea"/><text transform="translate(563.3,928.7) rotate(-90)" text-anchor="end" font-size="17.5" fill="#6d6d6d" font-family="Liberation Sans,sans-serif">250</text><rect x="542" y="1058.2" width="35" height="1" fill="#e5e5ea"/><rect x="566" y="1084.7" width="11" height="1" fill="#e5e5ea"/><rect x="566" y="1111.1" width="11" height="1" fill="#e5e5ea"/><rect x="566" y="1137.6" width="11" height="1" fill="#e5e5ea"/><rect x="566" y="1164.0" width="11" height="1" fill="#e5e5ea"/><text transform="translate(563.3,1060.9) rotate(-90)" text-anchor="end" font-size="17.5" fill="#6d6d6d" font-family="Liberation Sans,sans-serif">300</text><rect x="542" y="1190.5" width="35" height="1" fill="#e5e5ea"/><rect x="566" y="1216.9" width="11" height="1" fill="#e5e5ea"/><rect x="566" y="1243.4" width="11" height="1" fill="#e5e5ea"/><rect x="566" y="1269.9" width="11" height="1" fill="#e5e5ea"/><rect x="566" y="1296.3" width="11" height="1" fill="#e5e5ea"/><text transform="translate(563.3,1193.2) rotate(-90)" text-anchor="end" font-size="17.5" fill="#6d6d6d" font-family="Liberation Sans,sans-serif">350</text><rect x="542" y="1322.8" width="35" height="1" fill="#e5e5ea"/><rect x="566" y="1349.2" width="11" height="1" fill="#e5e5ea"/><rect x="566" y="1375.7" width="11" height="1" fill="#e5e5ea"/><rect x="566" y="1402.1" width="11" height="1" fill="#e5e5ea"/><rect x="566" y="1428.6" width="11" height="1" fill="#e5e5ea"/><text transform="translate(563.3,1325.5) rotate(-90)" text-anchor="end" font-size="17.5" fill="#6d6d6d" font-family="Liberation Sans,sans-serif">400</text><rect x="542" y="1455.0" width="35" height="1" fill="#e5e5ea"/><rect x="566" y="1481.5" width="11" height="1" fill="#e5e5ea"/><rect x="566" y="1507.9" width="11" height="1" fill="#e5e5ea"/><rect x="566" y="1534.4" width="11" height="1" fill="#e5e5ea"/><rect x="566" y="1560.8" width="11" height="1" fill="#e5e5ea"/><text transform="translate(563.3,1457.7) rotate(-90)" text-anchor="end" font-size="17.5" fill="#6d6d6d" font-family="Liberation Sans,sans-serif">450</text></g><clipPath id="cvc"><rect x="578" y="306" width="1685" height="1127"/></clipPath><g clip-path="url(#cvc)"><rect x="578" y="306" width="1685" height="1127" fill="#fff"/><rect x="945" y="327.5" width="560" height="158.5" rx="79.2" fill="#e9f1fc" stroke="#8db5f0" stroke-width="2"/><rect x="945" y="1428.4" width="560" height="158.5" rx="79.2" fill="#e9f1fc" stroke="#8db5f0" stroke-width="2"/><text x="1224.2" y="393.8" font-size="47.3" fill="#3b55b6" font-family="Liberation Sans,sans-serif" font-weight="700" text-anchor="middle" letter-spacing="-.33">Level 01</text><text x="1224.7" y="449.2" font-size="47.3" fill="#3b55b6" font-family="Liberation Sans,sans-serif" font-weight="700" text-anchor="middle">Context Diagram</text><rect x="805.6" y="510.6" width="840.2" height="840.2" rx="8" fill="#bde6df" stroke="#1b2147" stroke-width="1.3"/><circle cx="1192.4" cy="575.3" r="38" fill="#ad7a5f" stroke="#a65c38" stroke-width="1"/><defs><linearGradient id="hl1" x1="0" y1="0" x2="0" y2="1"><stop offset="0" stop-color="#c9a690" stop-opacity=".95"/><stop offset="1" stop-color="#b98a72" stop-opacity=".25"/></linearGradient><linearGradient id="hl2" x1="0" y1="0" x2="1" y2="0"><stop offset="0" stop-color="#cba893" stop-opacity=".95"/><stop offset="1" stop-color="#b98a72" stop-opacity=".15"/></linearGradient></defs><ellipse cx="1209" cy="554.5" rx="21" ry="9.5" transform="rotate(32 1209 554.5)" fill="url(#hl1)"/><ellipse cx="1165.5" cy="558" rx="6.5" ry="17" transform="rotate(38 1165.5 558)" fill="url(#hl2)"/><path d="M1163,572 Q1171,560 1179.2,555.3 Q1184,556.5 1200,571 Z" fill="#f2d3b3" stroke="#a65c38" stroke-width="1"/><path d="M1146.5,720 L1095.5,791.5" stroke="#141414" stroke-width="2.8" stroke-dasharray="21.5 13.5" fill="none" stroke-dashoffset="4"/><path d="M1090.2,799 L1094.2,785 L1103.6,791.8 Z" fill="#141414"/><path d="M1253.5,720 L1325.5,793" stroke="#141414" stroke-width="2.8" stroke-dasharray="21.5 13.5" fill="none" stroke-dashoffset="14"/><path d="M1332.8,800.3 L1319.3,794.6 L1327.6,786.4 Z" fill="#141414"/><path d="M1023,1031.3 L1053.5,1061.3" stroke="#141414" stroke-width="2.8" stroke-dasharray="21.5 13.5" fill="none"/><path d="M1061,1068.7 L1047.7,1063.2 L1055.8,1055 Z" fill="#141414"/><path d="M1417.8,1031.3 L1372,1076.3" stroke="#141414" stroke-width="2.8" stroke-dasharray="21.5 13.5" fill="none"/><path d="M1364.3,1084 L1369.8,1070.6 L1378,1078.8 Z" fill="#141414"/><rect x="967.3" y="800.6" width="209.6" height="208.8" rx="8" fill="#fff" stroke="#1b2147" stroke-width="1.3"/><rect x="979.3" y="827.4" width="185.6" height="144.2" fill="#bde6df" stroke="#26262c" stroke-width="1.2"/><rect x="990.8" y="845" width="164.4" height="54.2" fill="#fff" stroke="#4f86e4" stroke-width="1" stroke-dasharray="4.5 3"/><rect x="1035.3" y="848.9" width="74.8" height="22.4" fill="#3776d3"/><rect x="1033" y="871.3" width="79.2" height="23.2" fill="#3776d3"/><text x="1072.7" y="865.8" fill="#fff" font-family="Liberation Sans,sans-serif" font-weight="700" text-anchor="middle" font-size="18.7" textLength="72.5">Network</text><text x="1072.3" y="888.6" fill="#fff" font-family="Liberation Sans,sans-serif" font-weight="700" text-anchor="middle" font-size="18.7" textLength="77.5">Operator</text><rect x="1112.6" y="871.3" width="1.8" height="23.2" fill="#000"/><text x="1071.8" y="920.2" font-family="Liberation Sans,sans-serif" text-anchor="middle" font-size="11.7" fill="#1e1e26" letter-spacing=".1">Sends messages, tests</text><text x="1071.8" y="934.2" font-family="Liberation Sans,sans-serif" text-anchor="middle" font-size="11.7" fill="#1e1e26" letter-spacing=".1">routing, observes delivery</text><text x="1071.8" y="948.1" font-family="Liberation Sans,sans-serif" text-anchor="middle" font-size="11.7" fill="#1e1e26" letter-spacing=".1">paths.</text><rect x="1285.4" y="800.6" width="209.4" height="208.8" rx="8" fill="#fff" stroke="#1b2147" stroke-width="1.3"/><rect x="1297.2" y="832.2" width="185.6" height="144.4" fill="#bde6df" stroke="#26262c" stroke-width="1.2"/><text x="1389.5" y="866.8" fill="#15151c" font-family="Liberation Sans,sans-serif" font-weight="700" text-anchor="middle" font-size="18.7">System</text><text x="1389.5" y="889.8" fill="#15151c" font-family="Liberation Sans,sans-serif" font-weight="700" text-anchor="middle" font-size="18.7">Administrator</text><text x="1389.5" y="913.8" font-family="Liberation Sans,sans-serif" text-anchor="middle" font-size="11.7" fill="#1e1e26" letter-spacing=".1">Configures network topology,</text><text x="1389.5" y="927.8" font-family="Liberation Sans,sans-serif" text-anchor="middle" font-size="11.7" fill="#1e1e26" letter-spacing=".1">updates routing rules, monitors</text><text x="1389.5" y="941.7" font-family="Liberation Sans,sans-serif" text-anchor="middle" font-size="11.7" fill="#1e1e26" letter-spacing=".1">performance.</text><rect x="1087.8" y="1058.5" width="255" height="255.8" rx="8" fill="#5a9d92" stroke="#1b2147" stroke-width="1.3"/><rect x="1110.8" y="1067.2" width="208.8" height="208" rx="8" fill="#fff" stroke="#1b2147" stroke-width="1.2"/><rect x="1122.6" y="1102.5" width="186.4" height="116.3" rx="8" fill="#bde6df" stroke="#1b2147" stroke-width="1.2"/><text x="1215" y="1132.2" fill="#15151c" font-family="Liberation Sans,sans-serif" font-weight="700" text-anchor="middle" font-size="18.7">Network</text><text x="1215" y="1155.2" fill="#15151c" font-family="Liberation Sans,sans-serif" font-weight="700" text-anchor="middle" font-size="18.7">Emulator</text><text x="1215" y="1177.0" font-family="Liberation Sans,sans-serif" text-anchor="middle" font-size="11.7" fill="#1e1e26" letter-spacing=".1">Simulates routing, forwarding,</text><text x="1215" y="1191.0" font-family="Liberation Sans,sans-serif" text-anchor="middle" font-size="11.7" fill="#1e1e26" letter-spacing=".1">and network topology for</text><text x="1215" y="1204.9" font-family="Liberation Sans,sans-serif" text-anchor="middle" font-size="11.7" fill="#1e1e26" letter-spacing=".1">educational use.</text><path d="M805.4,930.2 H616.5 V1445" fill="none" stroke="#e93323" stroke-width="9.2" stroke-dasharray="54.6 36.6"/><text transform="translate(1898.6,913.4) rotate(90)" font-size="121.1" fill="#3f4cab" font-family="Liberation Sans,sans-serif" font-weight="700">C4 Model</text><rect x="2126.5" y="648.8" width="200" height="605" fill="#6c8cf6" stroke="#34343c" stroke-width="1.4"/><rect x="2218" y="774.2" width="120" height="157" fill="#9fdfd5" stroke="#34343c" stroke-width="1.3"/><rect x="2198.3" y="1041.8" width="140" height="157.5" fill="#9fdfd5" stroke="#34343c" stroke-width="1.3"/><text x="2259" y="842.5" font-family="Liberation Sans,sans-serif" font-size="17.5" fill="#15151c">P</text><text x="2249.5" y="863" font-family="Liberation Sans,sans-serif" font-size="17.5" fill="#15151c">co</text><text x="2254.5" y="883.5" font-family="Liberation Sans,sans-serif" font-size="17.5" fill="#15151c">s</text><text x="2244.5" y="904" font-family="Liberation Sans,sans-serif" font-size="17.5" fill="#15151c">me</text><rect x="2261.6" y="1076" width="1.2" height="17" fill="#a6a660"/></g></svg><div id="fl" style="z-index:3"><div style="left:640px;top:567.5px;width:866px;height:158.5px;background:#fff;border-radius:9px;box-shadow:0 3px 12px rgba(0,0,0,.13),0 0 1px rgba(0,0,0,.2)"></div><span style="left:686.5px;top:662.00px;font-size:21.5px;line-height:21.5px;color:#1c1c1c;font-weight:400;font-family:'Liberation Sans',sans-serif;white-space:nowrap;transform:translateX(-50%);">AI</span><div style="left:735px;top:583px;width:1px;height:128px;background:#e6e6e6"></div><div style="left:756px;top:583px;width:180px;height:47.5px;border:1px solid #e2e2e2;border-radius:7px;box-sizing:border-box"></div><span style="left:812px;top:597.00px;font-size:26.3px;line-height:26.3px;color:#101010;font-weight:400;font-family:'Liberation Sans',sans-serif;white-space:nowrap;">Arial</span><div style="left:948px;top:583px;width:96px;height:47.5px;border:1px solid #e2e2e2;border-radius:7px;box-sizing:border-box"></div><span style="left:956.3px;top:597.00px;font-size:26.3px;line-height:26.3px;color:#101010;font-weight:400;font-family:'Liberation Sans',sans-serif;white-space:nowrap;">20</span><div style="left:756px;top:639.2px;width:48px;height:47.8px;background:#f0f0f0;border-radius:7px"></div><span style="left:1122.5px;top:642.00px;font-size:31.5px;line-height:31.5px;color:#3e3e3e;font-weight:400;font-family:'Liberation Sans',sans-serif;white-space:nowrap;letter-spacing:-1px;-webkit-text-stroke:.5px #3e3e3e">ab</span><div style="left:1240px;top:583px;width:1px;height:128px;background:#e6e6e6"></div><div style="left:1369px;top:583px;width:1px;height:128px;background:#e9e9e9"></div><div style="left:605px;top:1436px;width:957px;height:20px;background:#d2d3d5;border-radius:10px"></div><div style="left:2266px;top:337px;width:20px;height:530px;background:#d0d1d3;border-radius:10px"></div></div><svg class="L" width="2832" height="1556" viewBox="0 0 2832 1556" style="z-index:4"><defs><linearGradient id="aig" x1="0" y1="1" x2="1" y2="0"><stop offset="0" stop-color="#8a3df5"/><stop offset=".55" stop-color="#5a55f5"/><stop offset="1" stop-color="#2f86ff"/></linearGradient></defs><path d="M685,600.8 Q688.5,613.5 701.5,617 Q688.5,620.5 685,633.3 Q681.5,620.5 668.8,617 Q681.5,613.5 685,600.8 Z" fill="url(#aig)"/><path d="M699,595.5 Q700.5,601 706,602.5 Q700.5,604 699,609.5 Q697.5,604 692,602.5 Q697.5,601 699,595.5 Z" fill="#3b7cff"/><circle cx="782.2" cy="605.6" r="10.4" fill="none" stroke="#c6c6c6" stroke-width="3.4"/><path d="M790.2,613.8 L796.3,619.5" fill="none" stroke="#c6c6c6" stroke-width="3.6" stroke-linecap="round" stroke-linejoin="round" /><path d="M921.5,602.7 L932.5,602.7 L927.0,609.1 Z" fill="#7a7a7a" stroke="#7a7a7a" stroke-width="1" stroke-linejoin="round"/><path d="M1029.5,602.7 L1040.5,602.7 L1035.0,609.1 Z" fill="#7a7a7a" stroke="#7a7a7a" stroke-width="1" stroke-linejoin="round"/><path d="M1066,619 L1078,596.3 L1090,619 M1070.6,611.3 H1085.4" fill="none" stroke="#3e3e3e" stroke-width="3.6" stroke-linecap="round" stroke-linejoin="round" /><path d="M1084.6,598.7 H1096 M1090.3,592.9 V604.6" fill="none" stroke="#7c7c7c" stroke-width="3.4" stroke-linecap="butt" stroke-linejoin="round" /><path d="M1126,619 L1138,596.3 L1150,619 M1130.6,611.3 H1145.4" fill="none" stroke="#3e3e3e" stroke-width="3.6" stroke-linecap="round" stroke-linejoin="round" /><path d="M1146.3,598.7 H1156" fill="none" stroke="#858585" stroke-width="3.4" stroke-linecap="butt" stroke-linejoin="round" /><path d="M1190,592.8 H1209.6 M1182,601 H1218 M1190,608.8 H1209.6" fill="none" stroke="#3e3e3e" stroke-width="3.5" stroke-linecap="butt" stroke-linejoin="round" /><path d="M772,652.3 V673 H782 a5.7,5.7 0 0 0 0,-11.4 H772 M780.3,661.6 a4.65,4.65 0 0 0 0,-9.3 H772" fill="none" stroke="#3e3e3e" stroke-width="3.8" stroke-linecap="round" stroke-linejoin="round" /><path d="M838.5,652.5 H848.5 M831.5,673 H841.5 M843.7,652.5 L836.3,673" fill="none" stroke="#3e3e3e" stroke-width="3.6" stroke-linecap="round" stroke-linejoin="round" /><path d="M892,652.3 V662 a8.2,8.2 0 0 0 16.4,0 V652.3" fill="none" stroke="#3e3e3e" stroke-width="3.6" stroke-linecap="round" stroke-linejoin="round" /><path d="M890.5,675.2 H910" fill="none" stroke="#3e3e3e" stroke-width="2" stroke-linecap="round" stroke-linejoin="round" /><path d="M944.5,662.5 H973.5" fill="none" stroke="#3e3e3e" stroke-width="2" stroke-linecap="round" stroke-linejoin="round" /><path d="M966.6,657.6 a7.6,6.2 0 0 0 -15.2,0 M951.4,668 a7.6,6.2 0 0 0 15.2,0" fill="none" stroke="#3e3e3e" stroke-width="3.4" stroke-linecap="round" stroke-linejoin="round" /><path d="M1006.3,650.3 V675.5 M1002.6,654.3 L1006.3,650 L1010,654.3 M1002.6,671.5 L1006.3,675.8 L1010,671.5" fill="none" stroke="#3e3e3e" stroke-width="2.2" stroke-linecap="round" stroke-linejoin="round" /><path d="M1003,659 H1009.6 M1003,666.5 H1009.6" fill="none" stroke="#3e3e3e" stroke-width="1.6" stroke-linecap="round" stroke-linejoin="round" /><path d="M1018.5,653.5 H1036 M1018.5,662.8 H1036 M1018.5,672.2 H1036" fill="none" stroke="#3e3e3e" stroke-width="3.8" stroke-linecap="round" stroke-linejoin="round" /><circle cx="1065.8" cy="653.7" r="2.1" fill="#3e3e3e"/><circle cx="1065.8" cy="662.9" r="2.1" fill="#3e3e3e"/><circle cx="1065.8" cy="672.2" r="2.1" fill="#3e3e3e"/><path d="M1073.5,653.7 H1094 M1073.5,662.9 H1094 M1073.5,672.2 H1094" fill="none" stroke="#3e3e3e" stroke-width="3.8" stroke-linecap="round" stroke-linejoin="round" /><path d="M1187,669.8 L1200.3,646.8 L1213.6,669.8 M1192.3,662.2 H1208.3" fill="none" stroke="#3e3e3e" stroke-width="3.4" stroke-linecap="round" stroke-linejoin="round" /><path d="M1184,678.2 H1217" fill="none" stroke="#0c0c0c" stroke-width="3.6" stroke-linecap="butt" stroke-linejoin="round" /><path d="M1289.3,613.5 L1306.6,629.8 L1318.4,613.4 L1303.5,602.5 Q1298,610.9 1289.3,613.5 Z" fill="none" stroke="#3e3e3e" stroke-width="4.2" stroke-linecap="round" stroke-linejoin="round" /><path d="M1304.2,603 L1317.8,614" fill="none" stroke="#3e3e3e" stroke-width="7.5" stroke-linecap="round" stroke-linejoin="round" /><path d="M1312.4,607.1 L1317.7,602" fill="none" stroke="#3e3e3e" stroke-width="8.3" stroke-linecap="round" stroke-linejoin="round" /><text class="k" x="1257.42" y="679.72" font-size="24.12" fill="#1c1c1c">서식 복사</text><circle cx="1422" cy="614.9" r="17.95" fill="none" stroke="#3e3e3e" stroke-width="3.9"/><circle cx="1422" cy="606" r="3.1" fill="#3e3e3e"/><circle cx="1422" cy="614.9" r="3.1" fill="#3e3e3e"/><circle cx="1422" cy="623.9" r="3.1" fill="#3e3e3e"/><text class="k" x="1399.97" y="679.49" font-size="23.46" fill="#1c1c1c">기타</text><path d="M1474,588 L1480.8,586 L1485.7,581.7 L1491.6,587.1 L1487.8,590.8 L1485,599.2 Z" fill="none" stroke="#9c9c9c" stroke-width="2" stroke-linecap="round" stroke-linejoin="round" /><path d="M1478.7,594.1 L1472.8,599.8" fill="none" stroke="#9c9c9c" stroke-width="2.8" stroke-linecap="round" stroke-linejoin="round" /><path d="M1472.2,700 H1479 V693.2 M1485,712.8 V705.5 H1492" fill="none" stroke="#8e8e8e" stroke-width="2" stroke-linecap="butt" stroke-linejoin="miter" /><path d="M1692.5,608 L1212,830.3" stroke="#e93e23" stroke-width="10.6" fill="none"/><path d="M1165,852.3 L1204,804.8 L1227,855 Z" fill="#e93e23"/><text class="k" x="1656" y="591" font-size="70" font-weight="700" fill="#e93e23" textLength="577" lengthAdjust="spacing">클릭해 텍스트 수정</text></svg><div id="dim"></div></body></html>
